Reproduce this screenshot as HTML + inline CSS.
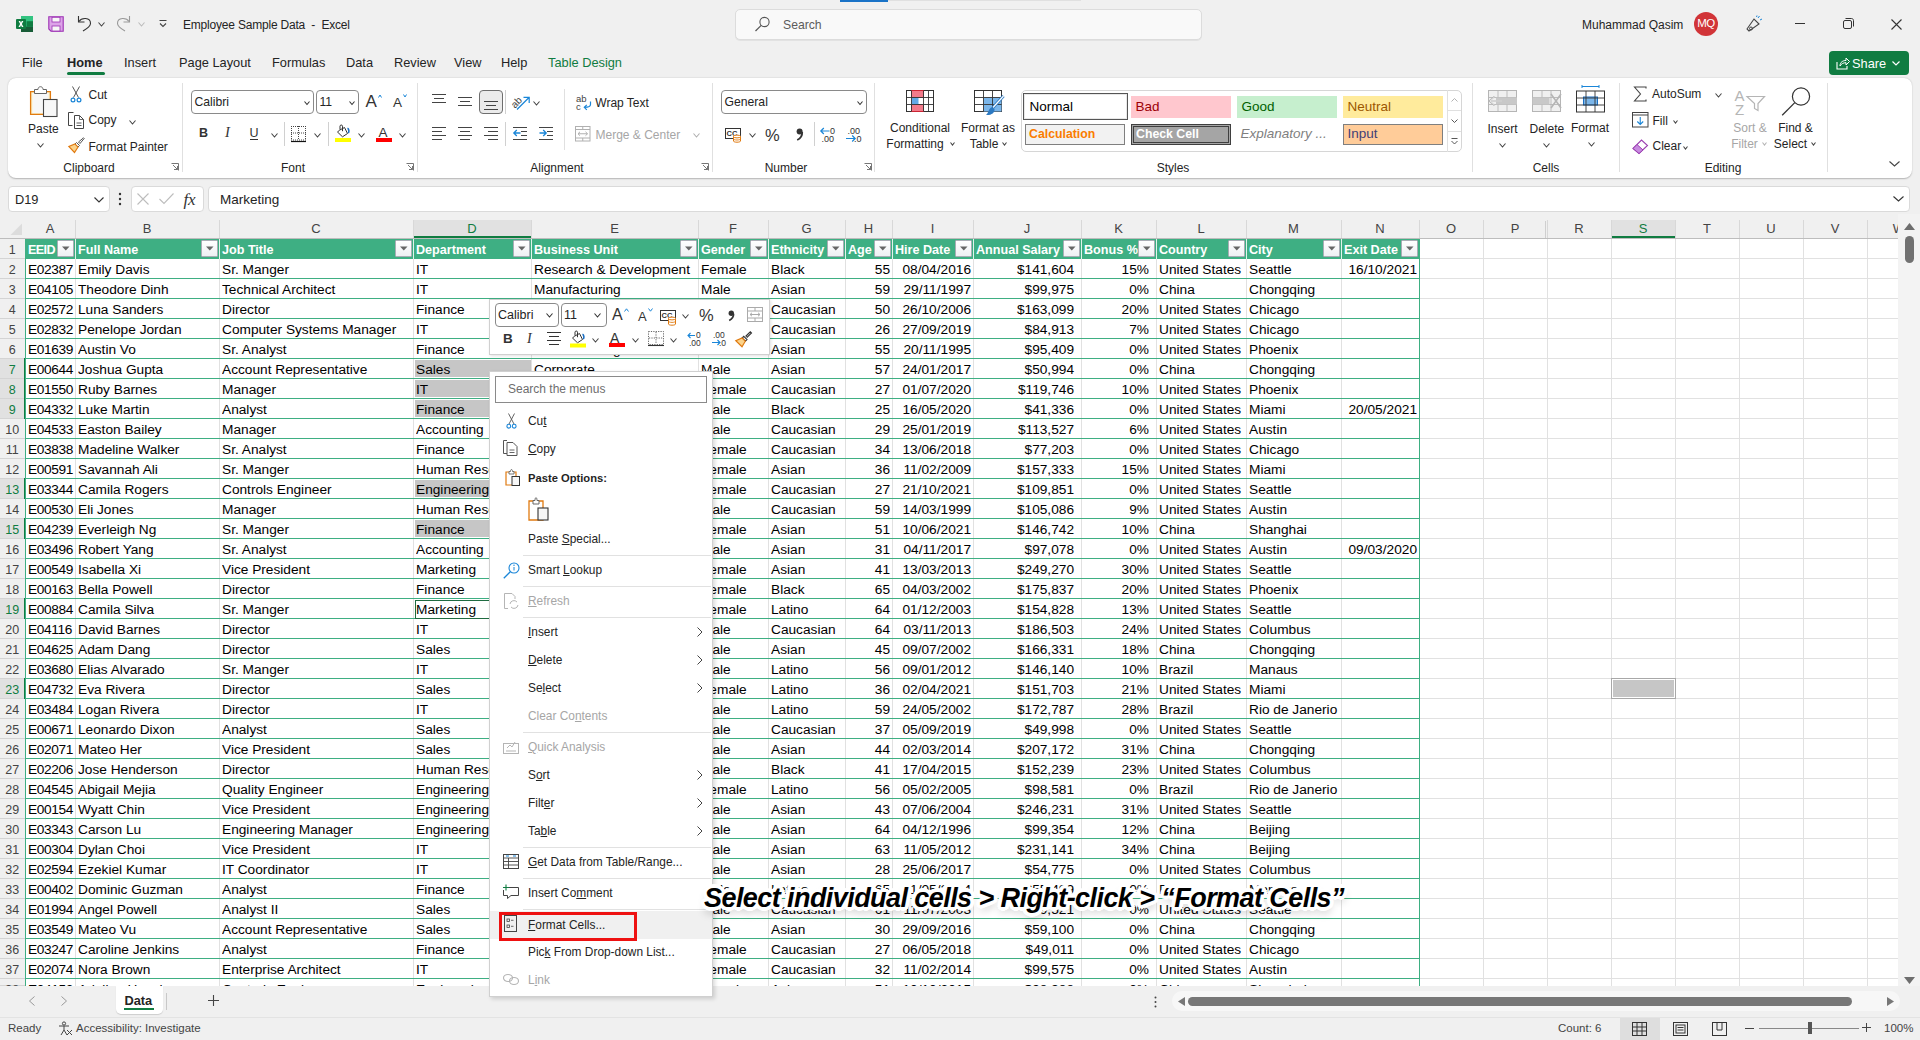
<!DOCTYPE html><html><head><meta charset="utf-8"><title>Excel</title><style>
*{box-sizing:border-box;margin:0;padding:0}
html,body{width:1920px;height:1040px;overflow:hidden}
body{position:relative;background:#f0f0f0;font-family:"Liberation Sans",sans-serif;color:#242424}
.a{position:absolute}
.t{position:absolute;white-space:nowrap;line-height:1}
.c{position:absolute;white-space:nowrap;font-size:13.7px;line-height:1;color:#000}
svg{position:absolute;overflow:visible}
</style></head><body>
<div class="a" style="left:26px;top:239px;width:1872px;height:747px;background:#fff"></div>
<div class="a" style="left:0;top:239px;width:25px;height:20px;background:#f0f0f0;border-bottom:1px solid #d4d4d4"></div>
<div class="a" style="left:0;top:239px;width:25px;height:20px;overflow:hidden"><div class="t" style="left:0;width:24.5px;text-align:center;top:5px;font-size:12.5px;color:#444">1</div></div>
<div class="a" style="left:0;top:259px;width:25px;height:20px;background:#f0f0f0;border-bottom:1px solid #d4d4d4"></div>
<div class="a" style="left:0;top:259px;width:25px;height:20px;overflow:hidden"><div class="t" style="left:0;width:24.5px;text-align:center;top:5px;font-size:12.5px;color:#444">2</div></div>
<div class="a" style="left:0;top:279px;width:25px;height:20px;background:#f0f0f0;border-bottom:1px solid #d4d4d4"></div>
<div class="a" style="left:0;top:279px;width:25px;height:20px;overflow:hidden"><div class="t" style="left:0;width:24.5px;text-align:center;top:5px;font-size:12.5px;color:#444">3</div></div>
<div class="a" style="left:0;top:299px;width:25px;height:20px;background:#f0f0f0;border-bottom:1px solid #d4d4d4"></div>
<div class="a" style="left:0;top:299px;width:25px;height:20px;overflow:hidden"><div class="t" style="left:0;width:24.5px;text-align:center;top:5px;font-size:12.5px;color:#444">4</div></div>
<div class="a" style="left:0;top:319px;width:25px;height:20px;background:#f0f0f0;border-bottom:1px solid #d4d4d4"></div>
<div class="a" style="left:0;top:319px;width:25px;height:20px;overflow:hidden"><div class="t" style="left:0;width:24.5px;text-align:center;top:5px;font-size:12.5px;color:#444">5</div></div>
<div class="a" style="left:0;top:339px;width:25px;height:20px;background:#f0f0f0;border-bottom:1px solid #d4d4d4"></div>
<div class="a" style="left:0;top:339px;width:25px;height:20px;overflow:hidden"><div class="t" style="left:0;width:24.5px;text-align:center;top:5px;font-size:12.5px;color:#444">6</div></div>
<div class="a" style="left:0;top:359px;width:25px;height:20px;background:#e1e1e1;border-bottom:1px solid #d4d4d4"></div>
<div class="a" style="left:0;top:359px;width:25px;height:20px;overflow:hidden"><div class="t" style="left:0;width:24.5px;text-align:center;top:5px;font-size:12.5px;color:#107c41">7</div></div>
<div class="a" style="left:24px;top:358px;width:2px;height:21px;background:#107c41"></div>
<div class="a" style="left:0;top:379px;width:25px;height:20px;background:#e1e1e1;border-bottom:1px solid #d4d4d4"></div>
<div class="a" style="left:0;top:379px;width:25px;height:20px;overflow:hidden"><div class="t" style="left:0;width:24.5px;text-align:center;top:5px;font-size:12.5px;color:#107c41">8</div></div>
<div class="a" style="left:24px;top:378px;width:2px;height:21px;background:#107c41"></div>
<div class="a" style="left:0;top:399px;width:25px;height:20px;background:#e1e1e1;border-bottom:1px solid #d4d4d4"></div>
<div class="a" style="left:0;top:399px;width:25px;height:20px;overflow:hidden"><div class="t" style="left:0;width:24.5px;text-align:center;top:5px;font-size:12.5px;color:#107c41">9</div></div>
<div class="a" style="left:24px;top:398px;width:2px;height:21px;background:#107c41"></div>
<div class="a" style="left:0;top:419px;width:25px;height:20px;background:#f0f0f0;border-bottom:1px solid #d4d4d4"></div>
<div class="a" style="left:0;top:419px;width:25px;height:20px;overflow:hidden"><div class="t" style="left:0;width:24.5px;text-align:center;top:5px;font-size:12.5px;color:#444">10</div></div>
<div class="a" style="left:0;top:439px;width:25px;height:20px;background:#f0f0f0;border-bottom:1px solid #d4d4d4"></div>
<div class="a" style="left:0;top:439px;width:25px;height:20px;overflow:hidden"><div class="t" style="left:0;width:24.5px;text-align:center;top:5px;font-size:12.5px;color:#444">11</div></div>
<div class="a" style="left:0;top:459px;width:25px;height:20px;background:#f0f0f0;border-bottom:1px solid #d4d4d4"></div>
<div class="a" style="left:0;top:459px;width:25px;height:20px;overflow:hidden"><div class="t" style="left:0;width:24.5px;text-align:center;top:5px;font-size:12.5px;color:#444">12</div></div>
<div class="a" style="left:0;top:479px;width:25px;height:20px;background:#e1e1e1;border-bottom:1px solid #d4d4d4"></div>
<div class="a" style="left:0;top:479px;width:25px;height:20px;overflow:hidden"><div class="t" style="left:0;width:24.5px;text-align:center;top:5px;font-size:12.5px;color:#107c41">13</div></div>
<div class="a" style="left:24px;top:478px;width:2px;height:21px;background:#107c41"></div>
<div class="a" style="left:0;top:499px;width:25px;height:20px;background:#f0f0f0;border-bottom:1px solid #d4d4d4"></div>
<div class="a" style="left:0;top:499px;width:25px;height:20px;overflow:hidden"><div class="t" style="left:0;width:24.5px;text-align:center;top:5px;font-size:12.5px;color:#444">14</div></div>
<div class="a" style="left:0;top:519px;width:25px;height:20px;background:#e1e1e1;border-bottom:1px solid #d4d4d4"></div>
<div class="a" style="left:0;top:519px;width:25px;height:20px;overflow:hidden"><div class="t" style="left:0;width:24.5px;text-align:center;top:5px;font-size:12.5px;color:#107c41">15</div></div>
<div class="a" style="left:24px;top:518px;width:2px;height:21px;background:#107c41"></div>
<div class="a" style="left:0;top:539px;width:25px;height:20px;background:#f0f0f0;border-bottom:1px solid #d4d4d4"></div>
<div class="a" style="left:0;top:539px;width:25px;height:20px;overflow:hidden"><div class="t" style="left:0;width:24.5px;text-align:center;top:5px;font-size:12.5px;color:#444">16</div></div>
<div class="a" style="left:0;top:559px;width:25px;height:20px;background:#f0f0f0;border-bottom:1px solid #d4d4d4"></div>
<div class="a" style="left:0;top:559px;width:25px;height:20px;overflow:hidden"><div class="t" style="left:0;width:24.5px;text-align:center;top:5px;font-size:12.5px;color:#444">17</div></div>
<div class="a" style="left:0;top:579px;width:25px;height:20px;background:#f0f0f0;border-bottom:1px solid #d4d4d4"></div>
<div class="a" style="left:0;top:579px;width:25px;height:20px;overflow:hidden"><div class="t" style="left:0;width:24.5px;text-align:center;top:5px;font-size:12.5px;color:#444">18</div></div>
<div class="a" style="left:0;top:599px;width:25px;height:20px;background:#e1e1e1;border-bottom:1px solid #d4d4d4"></div>
<div class="a" style="left:0;top:599px;width:25px;height:20px;overflow:hidden"><div class="t" style="left:0;width:24.5px;text-align:center;top:5px;font-size:12.5px;color:#107c41">19</div></div>
<div class="a" style="left:24px;top:598px;width:2px;height:21px;background:#107c41"></div>
<div class="a" style="left:0;top:619px;width:25px;height:20px;background:#f0f0f0;border-bottom:1px solid #d4d4d4"></div>
<div class="a" style="left:0;top:619px;width:25px;height:20px;overflow:hidden"><div class="t" style="left:0;width:24.5px;text-align:center;top:5px;font-size:12.5px;color:#444">20</div></div>
<div class="a" style="left:0;top:639px;width:25px;height:20px;background:#f0f0f0;border-bottom:1px solid #d4d4d4"></div>
<div class="a" style="left:0;top:639px;width:25px;height:20px;overflow:hidden"><div class="t" style="left:0;width:24.5px;text-align:center;top:5px;font-size:12.5px;color:#444">21</div></div>
<div class="a" style="left:0;top:659px;width:25px;height:20px;background:#f0f0f0;border-bottom:1px solid #d4d4d4"></div>
<div class="a" style="left:0;top:659px;width:25px;height:20px;overflow:hidden"><div class="t" style="left:0;width:24.5px;text-align:center;top:5px;font-size:12.5px;color:#444">22</div></div>
<div class="a" style="left:0;top:679px;width:25px;height:20px;background:#e1e1e1;border-bottom:1px solid #d4d4d4"></div>
<div class="a" style="left:0;top:679px;width:25px;height:20px;overflow:hidden"><div class="t" style="left:0;width:24.5px;text-align:center;top:5px;font-size:12.5px;color:#107c41">23</div></div>
<div class="a" style="left:24px;top:678px;width:2px;height:21px;background:#107c41"></div>
<div class="a" style="left:0;top:699px;width:25px;height:20px;background:#f0f0f0;border-bottom:1px solid #d4d4d4"></div>
<div class="a" style="left:0;top:699px;width:25px;height:20px;overflow:hidden"><div class="t" style="left:0;width:24.5px;text-align:center;top:5px;font-size:12.5px;color:#444">24</div></div>
<div class="a" style="left:0;top:719px;width:25px;height:20px;background:#f0f0f0;border-bottom:1px solid #d4d4d4"></div>
<div class="a" style="left:0;top:719px;width:25px;height:20px;overflow:hidden"><div class="t" style="left:0;width:24.5px;text-align:center;top:5px;font-size:12.5px;color:#444">25</div></div>
<div class="a" style="left:0;top:739px;width:25px;height:20px;background:#f0f0f0;border-bottom:1px solid #d4d4d4"></div>
<div class="a" style="left:0;top:739px;width:25px;height:20px;overflow:hidden"><div class="t" style="left:0;width:24.5px;text-align:center;top:5px;font-size:12.5px;color:#444">26</div></div>
<div class="a" style="left:0;top:759px;width:25px;height:20px;background:#f0f0f0;border-bottom:1px solid #d4d4d4"></div>
<div class="a" style="left:0;top:759px;width:25px;height:20px;overflow:hidden"><div class="t" style="left:0;width:24.5px;text-align:center;top:5px;font-size:12.5px;color:#444">27</div></div>
<div class="a" style="left:0;top:779px;width:25px;height:20px;background:#f0f0f0;border-bottom:1px solid #d4d4d4"></div>
<div class="a" style="left:0;top:779px;width:25px;height:20px;overflow:hidden"><div class="t" style="left:0;width:24.5px;text-align:center;top:5px;font-size:12.5px;color:#444">28</div></div>
<div class="a" style="left:0;top:799px;width:25px;height:20px;background:#f0f0f0;border-bottom:1px solid #d4d4d4"></div>
<div class="a" style="left:0;top:799px;width:25px;height:20px;overflow:hidden"><div class="t" style="left:0;width:24.5px;text-align:center;top:5px;font-size:12.5px;color:#444">29</div></div>
<div class="a" style="left:0;top:819px;width:25px;height:20px;background:#f0f0f0;border-bottom:1px solid #d4d4d4"></div>
<div class="a" style="left:0;top:819px;width:25px;height:20px;overflow:hidden"><div class="t" style="left:0;width:24.5px;text-align:center;top:5px;font-size:12.5px;color:#444">30</div></div>
<div class="a" style="left:0;top:839px;width:25px;height:20px;background:#f0f0f0;border-bottom:1px solid #d4d4d4"></div>
<div class="a" style="left:0;top:839px;width:25px;height:20px;overflow:hidden"><div class="t" style="left:0;width:24.5px;text-align:center;top:5px;font-size:12.5px;color:#444">31</div></div>
<div class="a" style="left:0;top:859px;width:25px;height:20px;background:#f0f0f0;border-bottom:1px solid #d4d4d4"></div>
<div class="a" style="left:0;top:859px;width:25px;height:20px;overflow:hidden"><div class="t" style="left:0;width:24.5px;text-align:center;top:5px;font-size:12.5px;color:#444">32</div></div>
<div class="a" style="left:0;top:879px;width:25px;height:20px;background:#f0f0f0;border-bottom:1px solid #d4d4d4"></div>
<div class="a" style="left:0;top:879px;width:25px;height:20px;overflow:hidden"><div class="t" style="left:0;width:24.5px;text-align:center;top:5px;font-size:12.5px;color:#444">33</div></div>
<div class="a" style="left:0;top:899px;width:25px;height:20px;background:#f0f0f0;border-bottom:1px solid #d4d4d4"></div>
<div class="a" style="left:0;top:899px;width:25px;height:20px;overflow:hidden"><div class="t" style="left:0;width:24.5px;text-align:center;top:5px;font-size:12.5px;color:#444">34</div></div>
<div class="a" style="left:0;top:919px;width:25px;height:20px;background:#f0f0f0;border-bottom:1px solid #d4d4d4"></div>
<div class="a" style="left:0;top:919px;width:25px;height:20px;overflow:hidden"><div class="t" style="left:0;width:24.5px;text-align:center;top:5px;font-size:12.5px;color:#444">35</div></div>
<div class="a" style="left:0;top:939px;width:25px;height:20px;background:#f0f0f0;border-bottom:1px solid #d4d4d4"></div>
<div class="a" style="left:0;top:939px;width:25px;height:20px;overflow:hidden"><div class="t" style="left:0;width:24.5px;text-align:center;top:5px;font-size:12.5px;color:#444">36</div></div>
<div class="a" style="left:0;top:959px;width:25px;height:20px;background:#f0f0f0;border-bottom:1px solid #d4d4d4"></div>
<div class="a" style="left:0;top:959px;width:25px;height:20px;overflow:hidden"><div class="t" style="left:0;width:24.5px;text-align:center;top:5px;font-size:12.5px;color:#444">37</div></div>
<div class="a" style="left:0;top:979px;width:25px;height:7px;background:#f0f0f0;border-bottom:1px solid #d4d4d4"></div>
<div class="a" style="left:0;top:979px;width:25px;height:7px;overflow:hidden"><div class="t" style="left:0;width:24.5px;text-align:center;top:5px;font-size:12.5px;color:#444">38</div></div>
<div class="a" style="left:25px;top:238px;width:1px;height:748px;background:#c8c8c8"></div>
<svg style="left:9px;top:223px" width="14" height="13"><path d="M13 0.5 L13 12 L1.5 12 Z" fill="#dcdcdc"/></svg>
<div class="a" style="left:75px;top:220px;width:1px;height:18px;background:#d8d8d8"></div>
<div class="a" style="left:25px;top:220px;width:50px;height:18px;overflow:hidden"><div class="t" style="left:0;width:50px;top:2px;text-align:center;font-size:13px;color:#444">A</div></div>
<div class="a" style="left:219px;top:220px;width:1px;height:18px;background:#d8d8d8"></div>
<div class="a" style="left:75px;top:220px;width:144px;height:18px;overflow:hidden"><div class="t" style="left:0;width:144px;top:2px;text-align:center;font-size:13px;color:#444">B</div></div>
<div class="a" style="left:413px;top:220px;width:1px;height:18px;background:#d8d8d8"></div>
<div class="a" style="left:219px;top:220px;width:194px;height:18px;overflow:hidden"><div class="t" style="left:0;width:194px;top:2px;text-align:center;font-size:13px;color:#444">C</div></div>
<div class="a" style="left:414px;top:220px;width:117px;height:18px;background:#e1e1e1;border-bottom:2px solid #107c41"></div>
<div class="a" style="left:531px;top:220px;width:1px;height:18px;background:#d8d8d8"></div>
<div class="a" style="left:413px;top:220px;width:118px;height:18px;overflow:hidden"><div class="t" style="left:0;width:118px;top:2px;text-align:center;font-size:13px;color:#107c41">D</div></div>
<div class="a" style="left:698px;top:220px;width:1px;height:18px;background:#d8d8d8"></div>
<div class="a" style="left:531px;top:220px;width:167px;height:18px;overflow:hidden"><div class="t" style="left:0;width:167px;top:2px;text-align:center;font-size:13px;color:#444">E</div></div>
<div class="a" style="left:768px;top:220px;width:1px;height:18px;background:#d8d8d8"></div>
<div class="a" style="left:698px;top:220px;width:70px;height:18px;overflow:hidden"><div class="t" style="left:0;width:70px;top:2px;text-align:center;font-size:13px;color:#444">F</div></div>
<div class="a" style="left:845px;top:220px;width:1px;height:18px;background:#d8d8d8"></div>
<div class="a" style="left:768px;top:220px;width:77px;height:18px;overflow:hidden"><div class="t" style="left:0;width:77px;top:2px;text-align:center;font-size:13px;color:#444">G</div></div>
<div class="a" style="left:892px;top:220px;width:1px;height:18px;background:#d8d8d8"></div>
<div class="a" style="left:845px;top:220px;width:47px;height:18px;overflow:hidden"><div class="t" style="left:0;width:47px;top:2px;text-align:center;font-size:13px;color:#444">H</div></div>
<div class="a" style="left:973px;top:220px;width:1px;height:18px;background:#d8d8d8"></div>
<div class="a" style="left:892px;top:220px;width:81px;height:18px;overflow:hidden"><div class="t" style="left:0;width:81px;top:2px;text-align:center;font-size:13px;color:#444">I</div></div>
<div class="a" style="left:1081px;top:220px;width:1px;height:18px;background:#d8d8d8"></div>
<div class="a" style="left:973px;top:220px;width:108px;height:18px;overflow:hidden"><div class="t" style="left:0;width:108px;top:2px;text-align:center;font-size:13px;color:#444">J</div></div>
<div class="a" style="left:1156px;top:220px;width:1px;height:18px;background:#d8d8d8"></div>
<div class="a" style="left:1081px;top:220px;width:75px;height:18px;overflow:hidden"><div class="t" style="left:0;width:75px;top:2px;text-align:center;font-size:13px;color:#444">K</div></div>
<div class="a" style="left:1246px;top:220px;width:1px;height:18px;background:#d8d8d8"></div>
<div class="a" style="left:1156px;top:220px;width:90px;height:18px;overflow:hidden"><div class="t" style="left:0;width:90px;top:2px;text-align:center;font-size:13px;color:#444">L</div></div>
<div class="a" style="left:1341px;top:220px;width:1px;height:18px;background:#d8d8d8"></div>
<div class="a" style="left:1246px;top:220px;width:95px;height:18px;overflow:hidden"><div class="t" style="left:0;width:95px;top:2px;text-align:center;font-size:13px;color:#444">M</div></div>
<div class="a" style="left:1419px;top:220px;width:1px;height:18px;background:#d8d8d8"></div>
<div class="a" style="left:1341px;top:220px;width:78px;height:18px;overflow:hidden"><div class="t" style="left:0;width:78px;top:2px;text-align:center;font-size:13px;color:#444">N</div></div>
<div class="a" style="left:1483px;top:220px;width:1px;height:18px;background:#d8d8d8"></div>
<div class="a" style="left:1419px;top:220px;width:64px;height:18px;overflow:hidden"><div class="t" style="left:0;width:64px;top:2px;text-align:center;font-size:13px;color:#444">O</div></div>
<div class="a" style="left:1547px;top:220px;width:1px;height:18px;background:#d8d8d8"></div>
<div class="a" style="left:1483px;top:220px;width:64px;height:18px;overflow:hidden"><div class="t" style="left:0;width:64px;top:2px;text-align:center;font-size:13px;color:#444">P</div></div>
<div class="a" style="left:1611px;top:220px;width:1px;height:18px;background:#d8d8d8"></div>
<div class="a" style="left:1547px;top:220px;width:64px;height:18px;overflow:hidden"><div class="t" style="left:0;width:64px;top:2px;text-align:center;font-size:13px;color:#444">R</div></div>
<div class="a" style="left:1612px;top:220px;width:63px;height:18px;background:#e1e1e1;border-bottom:2px solid #107c41"></div>
<div class="a" style="left:1675px;top:220px;width:1px;height:18px;background:#d8d8d8"></div>
<div class="a" style="left:1611px;top:220px;width:64px;height:18px;overflow:hidden"><div class="t" style="left:0;width:64px;top:2px;text-align:center;font-size:13px;color:#107c41">S</div></div>
<div class="a" style="left:1739px;top:220px;width:1px;height:18px;background:#d8d8d8"></div>
<div class="a" style="left:1675px;top:220px;width:64px;height:18px;overflow:hidden"><div class="t" style="left:0;width:64px;top:2px;text-align:center;font-size:13px;color:#444">T</div></div>
<div class="a" style="left:1803px;top:220px;width:1px;height:18px;background:#d8d8d8"></div>
<div class="a" style="left:1739px;top:220px;width:64px;height:18px;overflow:hidden"><div class="t" style="left:0;width:64px;top:2px;text-align:center;font-size:13px;color:#444">U</div></div>
<div class="a" style="left:1867px;top:220px;width:1px;height:18px;background:#d8d8d8"></div>
<div class="a" style="left:1803px;top:220px;width:64px;height:18px;overflow:hidden"><div class="t" style="left:0;width:64px;top:2px;text-align:center;font-size:13px;color:#444">V</div></div>
<div class="a" style="left:1931px;top:220px;width:1px;height:18px;background:#d8d8d8"></div>
<div class="a" style="left:1867px;top:220px;width:31px;height:18px;overflow:hidden"><div class="t" style="left:0;width:64px;top:2px;text-align:center;font-size:13px;color:#444">W</div></div>
<div class="a" style="left:0;top:238px;width:1898px;height:1px;background:#bdbdbd"></div>
<div class="a" style="left:1545px;top:221px;width:1px;height:17px;background:#cfcfcf"></div>
<div class="a" style="left:75px;top:239px;width:1px;height:747px;background:#e1e1e1"></div>
<div class="a" style="left:219px;top:239px;width:1px;height:747px;background:#e1e1e1"></div>
<div class="a" style="left:413px;top:239px;width:1px;height:747px;background:#e1e1e1"></div>
<div class="a" style="left:531px;top:239px;width:1px;height:747px;background:#e1e1e1"></div>
<div class="a" style="left:698px;top:239px;width:1px;height:747px;background:#e1e1e1"></div>
<div class="a" style="left:768px;top:239px;width:1px;height:747px;background:#e1e1e1"></div>
<div class="a" style="left:845px;top:239px;width:1px;height:747px;background:#e1e1e1"></div>
<div class="a" style="left:892px;top:239px;width:1px;height:747px;background:#e1e1e1"></div>
<div class="a" style="left:973px;top:239px;width:1px;height:747px;background:#e1e1e1"></div>
<div class="a" style="left:1081px;top:239px;width:1px;height:747px;background:#e1e1e1"></div>
<div class="a" style="left:1156px;top:239px;width:1px;height:747px;background:#e1e1e1"></div>
<div class="a" style="left:1246px;top:239px;width:1px;height:747px;background:#e1e1e1"></div>
<div class="a" style="left:1341px;top:239px;width:1px;height:747px;background:#e1e1e1"></div>
<div class="a" style="left:1419px;top:239px;width:1px;height:747px;background:#e1e1e1"></div>
<div class="a" style="left:1483px;top:239px;width:1px;height:747px;background:#e1e1e1"></div>
<div class="a" style="left:1547px;top:239px;width:1px;height:747px;background:#e1e1e1"></div>
<div class="a" style="left:1611px;top:239px;width:1px;height:747px;background:#e1e1e1"></div>
<div class="a" style="left:1675px;top:239px;width:1px;height:747px;background:#e1e1e1"></div>
<div class="a" style="left:1739px;top:239px;width:1px;height:747px;background:#e1e1e1"></div>
<div class="a" style="left:1803px;top:239px;width:1px;height:747px;background:#e1e1e1"></div>
<div class="a" style="left:1867px;top:239px;width:1px;height:747px;background:#e1e1e1"></div>
<div class="a" style="left:1420px;top:258px;width:478px;height:1px;background:#e1e1e1"></div>
<div class="a" style="left:1420px;top:278px;width:478px;height:1px;background:#e1e1e1"></div>
<div class="a" style="left:1420px;top:298px;width:478px;height:1px;background:#e1e1e1"></div>
<div class="a" style="left:1420px;top:318px;width:478px;height:1px;background:#e1e1e1"></div>
<div class="a" style="left:1420px;top:338px;width:478px;height:1px;background:#e1e1e1"></div>
<div class="a" style="left:1420px;top:358px;width:478px;height:1px;background:#e1e1e1"></div>
<div class="a" style="left:1420px;top:378px;width:478px;height:1px;background:#e1e1e1"></div>
<div class="a" style="left:1420px;top:398px;width:478px;height:1px;background:#e1e1e1"></div>
<div class="a" style="left:1420px;top:418px;width:478px;height:1px;background:#e1e1e1"></div>
<div class="a" style="left:1420px;top:438px;width:478px;height:1px;background:#e1e1e1"></div>
<div class="a" style="left:1420px;top:458px;width:478px;height:1px;background:#e1e1e1"></div>
<div class="a" style="left:1420px;top:478px;width:478px;height:1px;background:#e1e1e1"></div>
<div class="a" style="left:1420px;top:498px;width:478px;height:1px;background:#e1e1e1"></div>
<div class="a" style="left:1420px;top:518px;width:478px;height:1px;background:#e1e1e1"></div>
<div class="a" style="left:1420px;top:538px;width:478px;height:1px;background:#e1e1e1"></div>
<div class="a" style="left:1420px;top:558px;width:478px;height:1px;background:#e1e1e1"></div>
<div class="a" style="left:1420px;top:578px;width:478px;height:1px;background:#e1e1e1"></div>
<div class="a" style="left:1420px;top:598px;width:478px;height:1px;background:#e1e1e1"></div>
<div class="a" style="left:1420px;top:618px;width:478px;height:1px;background:#e1e1e1"></div>
<div class="a" style="left:1420px;top:638px;width:478px;height:1px;background:#e1e1e1"></div>
<div class="a" style="left:1420px;top:658px;width:478px;height:1px;background:#e1e1e1"></div>
<div class="a" style="left:1420px;top:678px;width:478px;height:1px;background:#e1e1e1"></div>
<div class="a" style="left:1420px;top:698px;width:478px;height:1px;background:#e1e1e1"></div>
<div class="a" style="left:1420px;top:718px;width:478px;height:1px;background:#e1e1e1"></div>
<div class="a" style="left:1420px;top:738px;width:478px;height:1px;background:#e1e1e1"></div>
<div class="a" style="left:1420px;top:758px;width:478px;height:1px;background:#e1e1e1"></div>
<div class="a" style="left:1420px;top:778px;width:478px;height:1px;background:#e1e1e1"></div>
<div class="a" style="left:1420px;top:798px;width:478px;height:1px;background:#e1e1e1"></div>
<div class="a" style="left:1420px;top:818px;width:478px;height:1px;background:#e1e1e1"></div>
<div class="a" style="left:1420px;top:838px;width:478px;height:1px;background:#e1e1e1"></div>
<div class="a" style="left:1420px;top:858px;width:478px;height:1px;background:#e1e1e1"></div>
<div class="a" style="left:1420px;top:878px;width:478px;height:1px;background:#e1e1e1"></div>
<div class="a" style="left:1420px;top:898px;width:478px;height:1px;background:#e1e1e1"></div>
<div class="a" style="left:1420px;top:918px;width:478px;height:1px;background:#e1e1e1"></div>
<div class="a" style="left:1420px;top:938px;width:478px;height:1px;background:#e1e1e1"></div>
<div class="a" style="left:1420px;top:958px;width:478px;height:1px;background:#e1e1e1"></div>
<div class="a" style="left:1420px;top:978px;width:478px;height:1px;background:#e1e1e1"></div>
<div class="a" style="left:26px;top:239px;width:1394px;height:20px;background:#3eaf83"></div>
<div class="a" style="left:75px;top:239px;width:1px;height:20px;background:#fff;opacity:.85"></div>
<div class="c" style="left:28px;top:244px;color:#fff;font-weight:bold;font-size:12.6px;letter-spacing:-0.6px">EEID</div>
<div class="a" style="left:57px;top:240px;width:17px;height:17px;background:linear-gradient(#fff,#eef0f3);border:1px solid #a9adb5;border-radius:1px"></div>
<svg style="left:62px;top:246px" width="8" height="5"><path d="M0 0.5 L7.5 0.5 L3.75 4.5 Z" fill="#666"/></svg>
<div class="a" style="left:219px;top:239px;width:1px;height:20px;background:#fff;opacity:.85"></div>
<div class="c" style="left:78px;top:244px;color:#fff;font-weight:bold;font-size:12.6px;">Full Name</div>
<div class="a" style="left:201px;top:240px;width:17px;height:17px;background:linear-gradient(#fff,#eef0f3);border:1px solid #a9adb5;border-radius:1px"></div>
<svg style="left:206px;top:246px" width="8" height="5"><path d="M0 0.5 L7.5 0.5 L3.75 4.5 Z" fill="#666"/></svg>
<div class="a" style="left:413px;top:239px;width:1px;height:20px;background:#fff;opacity:.85"></div>
<div class="c" style="left:222px;top:244px;color:#fff;font-weight:bold;font-size:12.6px;">Job Title</div>
<div class="a" style="left:395px;top:240px;width:17px;height:17px;background:linear-gradient(#fff,#eef0f3);border:1px solid #a9adb5;border-radius:1px"></div>
<svg style="left:400px;top:246px" width="8" height="5"><path d="M0 0.5 L7.5 0.5 L3.75 4.5 Z" fill="#666"/></svg>
<div class="a" style="left:531px;top:239px;width:1px;height:20px;background:#fff;opacity:.85"></div>
<div class="c" style="left:416px;top:244px;color:#fff;font-weight:bold;font-size:12.6px;">Department</div>
<div class="a" style="left:513px;top:240px;width:17px;height:17px;background:linear-gradient(#fff,#eef0f3);border:1px solid #a9adb5;border-radius:1px"></div>
<svg style="left:518px;top:246px" width="8" height="5"><path d="M0 0.5 L7.5 0.5 L3.75 4.5 Z" fill="#666"/></svg>
<div class="a" style="left:698px;top:239px;width:1px;height:20px;background:#fff;opacity:.85"></div>
<div class="c" style="left:534px;top:244px;color:#fff;font-weight:bold;font-size:12.6px;">Business Unit</div>
<div class="a" style="left:680px;top:240px;width:17px;height:17px;background:linear-gradient(#fff,#eef0f3);border:1px solid #a9adb5;border-radius:1px"></div>
<svg style="left:685px;top:246px" width="8" height="5"><path d="M0 0.5 L7.5 0.5 L3.75 4.5 Z" fill="#666"/></svg>
<div class="a" style="left:768px;top:239px;width:1px;height:20px;background:#fff;opacity:.85"></div>
<div class="c" style="left:701px;top:244px;color:#fff;font-weight:bold;font-size:12.6px;">Gender</div>
<div class="a" style="left:750px;top:240px;width:17px;height:17px;background:linear-gradient(#fff,#eef0f3);border:1px solid #a9adb5;border-radius:1px"></div>
<svg style="left:755px;top:246px" width="8" height="5"><path d="M0 0.5 L7.5 0.5 L3.75 4.5 Z" fill="#666"/></svg>
<div class="a" style="left:845px;top:239px;width:1px;height:20px;background:#fff;opacity:.85"></div>
<div class="c" style="left:771px;top:244px;color:#fff;font-weight:bold;font-size:12.6px;">Ethnicity</div>
<div class="a" style="left:827px;top:240px;width:17px;height:17px;background:linear-gradient(#fff,#eef0f3);border:1px solid #a9adb5;border-radius:1px"></div>
<svg style="left:832px;top:246px" width="8" height="5"><path d="M0 0.5 L7.5 0.5 L3.75 4.5 Z" fill="#666"/></svg>
<div class="a" style="left:892px;top:239px;width:1px;height:20px;background:#fff;opacity:.85"></div>
<div class="c" style="left:848px;top:244px;color:#fff;font-weight:bold;font-size:12.6px;">Age</div>
<div class="a" style="left:874px;top:240px;width:17px;height:17px;background:linear-gradient(#fff,#eef0f3);border:1px solid #a9adb5;border-radius:1px"></div>
<svg style="left:879px;top:246px" width="8" height="5"><path d="M0 0.5 L7.5 0.5 L3.75 4.5 Z" fill="#666"/></svg>
<div class="a" style="left:973px;top:239px;width:1px;height:20px;background:#fff;opacity:.85"></div>
<div class="c" style="left:895px;top:244px;color:#fff;font-weight:bold;font-size:12.6px;">Hire Date</div>
<div class="a" style="left:955px;top:240px;width:17px;height:17px;background:linear-gradient(#fff,#eef0f3);border:1px solid #a9adb5;border-radius:1px"></div>
<svg style="left:960px;top:246px" width="8" height="5"><path d="M0 0.5 L7.5 0.5 L3.75 4.5 Z" fill="#666"/></svg>
<div class="a" style="left:1081px;top:239px;width:1px;height:20px;background:#fff;opacity:.85"></div>
<div class="c" style="left:976px;top:244px;color:#fff;font-weight:bold;font-size:12.6px;">Annual Salary</div>
<div class="a" style="left:1063px;top:240px;width:17px;height:17px;background:linear-gradient(#fff,#eef0f3);border:1px solid #a9adb5;border-radius:1px"></div>
<svg style="left:1068px;top:246px" width="8" height="5"><path d="M0 0.5 L7.5 0.5 L3.75 4.5 Z" fill="#666"/></svg>
<div class="a" style="left:1156px;top:239px;width:1px;height:20px;background:#fff;opacity:.85"></div>
<div class="c" style="left:1084px;top:244px;color:#fff;font-weight:bold;font-size:12.6px;">Bonus %</div>
<div class="a" style="left:1138px;top:240px;width:17px;height:17px;background:linear-gradient(#fff,#eef0f3);border:1px solid #a9adb5;border-radius:1px"></div>
<svg style="left:1143px;top:246px" width="8" height="5"><path d="M0 0.5 L7.5 0.5 L3.75 4.5 Z" fill="#666"/></svg>
<div class="a" style="left:1246px;top:239px;width:1px;height:20px;background:#fff;opacity:.85"></div>
<div class="c" style="left:1159px;top:244px;color:#fff;font-weight:bold;font-size:12.6px;">Country</div>
<div class="a" style="left:1228px;top:240px;width:17px;height:17px;background:linear-gradient(#fff,#eef0f3);border:1px solid #a9adb5;border-radius:1px"></div>
<svg style="left:1233px;top:246px" width="8" height="5"><path d="M0 0.5 L7.5 0.5 L3.75 4.5 Z" fill="#666"/></svg>
<div class="a" style="left:1341px;top:239px;width:1px;height:20px;background:#fff;opacity:.85"></div>
<div class="c" style="left:1249px;top:244px;color:#fff;font-weight:bold;font-size:12.6px;">City</div>
<div class="a" style="left:1323px;top:240px;width:17px;height:17px;background:linear-gradient(#fff,#eef0f3);border:1px solid #a9adb5;border-radius:1px"></div>
<svg style="left:1328px;top:246px" width="8" height="5"><path d="M0 0.5 L7.5 0.5 L3.75 4.5 Z" fill="#666"/></svg>
<div class="a" style="left:1419px;top:239px;width:1px;height:20px;background:#fff;opacity:.85"></div>
<div class="c" style="left:1344px;top:244px;color:#fff;font-weight:bold;font-size:12.6px;">Exit Date</div>
<div class="a" style="left:1401px;top:240px;width:17px;height:17px;background:linear-gradient(#fff,#eef0f3);border:1px solid #a9adb5;border-radius:1px"></div>
<svg style="left:1406px;top:246px" width="8" height="5"><path d="M0 0.5 L7.5 0.5 L3.75 4.5 Z" fill="#666"/></svg>
<div class="a" style="left:26px;top:278px;width:1394px;height:1px;background:#3eaf83"></div>
<div class="a" style="left:28px;top:259px;width:47px;height:19px;overflow:hidden"><div class="c" style="left:0;top:4px;letter-spacing:-0.35px">E02387</div></div>
<div class="a" style="left:78px;top:259px;width:141px;height:19px;overflow:hidden"><div class="c" style="left:0;top:4px;">Emily Davis</div></div>
<div class="a" style="left:222px;top:259px;width:191px;height:19px;overflow:hidden"><div class="c" style="left:0;top:4px;">Sr. Manger</div></div>
<div class="a" style="left:416px;top:259px;width:115px;height:19px;overflow:hidden"><div class="c" style="left:0;top:4px;">IT</div></div>
<div class="a" style="left:534px;top:259px;width:164px;height:19px;overflow:hidden"><div class="c" style="left:0;top:4px;">Research &amp; Development</div></div>
<div class="a" style="left:701px;top:259px;width:67px;height:19px;overflow:hidden"><div class="c" style="left:0;top:4px;">Female</div></div>
<div class="a" style="left:771px;top:259px;width:74px;height:19px;overflow:hidden"><div class="c" style="left:0;top:4px;">Black</div></div>
<div class="a" style="left:846px;top:259px;width:46px;height:19px;overflow:hidden"><div class="c" style="right:2px;top:4px">55</div></div>
<div class="a" style="left:893px;top:259px;width:80px;height:19px;overflow:hidden"><div class="c" style="right:2px;top:4px">08/04/2016</div></div>
<div class="a" style="left:974px;top:259px;width:107px;height:19px;overflow:hidden"><div class="c" style="right:7px;top:4px">$141,604</div></div>
<div class="a" style="left:1082px;top:259px;width:74px;height:19px;overflow:hidden"><div class="c" style="right:7px;top:4px">15%</div></div>
<div class="a" style="left:1159px;top:259px;width:87px;height:19px;overflow:hidden"><div class="c" style="left:0;top:4px;">United States</div></div>
<div class="a" style="left:1249px;top:259px;width:92px;height:19px;overflow:hidden"><div class="c" style="left:0;top:4px;">Seattle</div></div>
<div class="a" style="left:1342px;top:259px;width:77px;height:19px;overflow:hidden"><div class="c" style="right:2px;top:4px">16/10/2021</div></div>
<div class="a" style="left:26px;top:298px;width:1394px;height:1px;background:#3eaf83"></div>
<div class="a" style="left:28px;top:279px;width:47px;height:19px;overflow:hidden"><div class="c" style="left:0;top:4px;letter-spacing:-0.35px">E04105</div></div>
<div class="a" style="left:78px;top:279px;width:141px;height:19px;overflow:hidden"><div class="c" style="left:0;top:4px;">Theodore Dinh</div></div>
<div class="a" style="left:222px;top:279px;width:191px;height:19px;overflow:hidden"><div class="c" style="left:0;top:4px;">Technical Architect</div></div>
<div class="a" style="left:416px;top:279px;width:115px;height:19px;overflow:hidden"><div class="c" style="left:0;top:4px;">IT</div></div>
<div class="a" style="left:534px;top:279px;width:164px;height:19px;overflow:hidden"><div class="c" style="left:0;top:4px;">Manufacturing</div></div>
<div class="a" style="left:701px;top:279px;width:67px;height:19px;overflow:hidden"><div class="c" style="left:0;top:4px;">Male</div></div>
<div class="a" style="left:771px;top:279px;width:74px;height:19px;overflow:hidden"><div class="c" style="left:0;top:4px;">Asian</div></div>
<div class="a" style="left:846px;top:279px;width:46px;height:19px;overflow:hidden"><div class="c" style="right:2px;top:4px">59</div></div>
<div class="a" style="left:893px;top:279px;width:80px;height:19px;overflow:hidden"><div class="c" style="right:2px;top:4px">29/11/1997</div></div>
<div class="a" style="left:974px;top:279px;width:107px;height:19px;overflow:hidden"><div class="c" style="right:7px;top:4px">$99,975</div></div>
<div class="a" style="left:1082px;top:279px;width:74px;height:19px;overflow:hidden"><div class="c" style="right:7px;top:4px">0%</div></div>
<div class="a" style="left:1159px;top:279px;width:87px;height:19px;overflow:hidden"><div class="c" style="left:0;top:4px;">China</div></div>
<div class="a" style="left:1249px;top:279px;width:92px;height:19px;overflow:hidden"><div class="c" style="left:0;top:4px;">Chongqing</div></div>
<div class="a" style="left:26px;top:318px;width:1394px;height:1px;background:#3eaf83"></div>
<div class="a" style="left:28px;top:299px;width:47px;height:19px;overflow:hidden"><div class="c" style="left:0;top:4px;letter-spacing:-0.35px">E02572</div></div>
<div class="a" style="left:78px;top:299px;width:141px;height:19px;overflow:hidden"><div class="c" style="left:0;top:4px;">Luna Sanders</div></div>
<div class="a" style="left:222px;top:299px;width:191px;height:19px;overflow:hidden"><div class="c" style="left:0;top:4px;">Director</div></div>
<div class="a" style="left:416px;top:299px;width:115px;height:19px;overflow:hidden"><div class="c" style="left:0;top:4px;">Finance</div></div>
<div class="a" style="left:534px;top:299px;width:164px;height:19px;overflow:hidden"><div class="c" style="left:0;top:4px;">Speciality Products</div></div>
<div class="a" style="left:701px;top:299px;width:67px;height:19px;overflow:hidden"><div class="c" style="left:0;top:4px;">Female</div></div>
<div class="a" style="left:771px;top:299px;width:74px;height:19px;overflow:hidden"><div class="c" style="left:0;top:4px;">Caucasian</div></div>
<div class="a" style="left:846px;top:299px;width:46px;height:19px;overflow:hidden"><div class="c" style="right:2px;top:4px">50</div></div>
<div class="a" style="left:893px;top:299px;width:80px;height:19px;overflow:hidden"><div class="c" style="right:2px;top:4px">26/10/2006</div></div>
<div class="a" style="left:974px;top:299px;width:107px;height:19px;overflow:hidden"><div class="c" style="right:7px;top:4px">$163,099</div></div>
<div class="a" style="left:1082px;top:299px;width:74px;height:19px;overflow:hidden"><div class="c" style="right:7px;top:4px">20%</div></div>
<div class="a" style="left:1159px;top:299px;width:87px;height:19px;overflow:hidden"><div class="c" style="left:0;top:4px;">United States</div></div>
<div class="a" style="left:1249px;top:299px;width:92px;height:19px;overflow:hidden"><div class="c" style="left:0;top:4px;">Chicago</div></div>
<div class="a" style="left:26px;top:338px;width:1394px;height:1px;background:#3eaf83"></div>
<div class="a" style="left:28px;top:319px;width:47px;height:19px;overflow:hidden"><div class="c" style="left:0;top:4px;letter-spacing:-0.35px">E02832</div></div>
<div class="a" style="left:78px;top:319px;width:141px;height:19px;overflow:hidden"><div class="c" style="left:0;top:4px;">Penelope Jordan</div></div>
<div class="a" style="left:222px;top:319px;width:191px;height:19px;overflow:hidden"><div class="c" style="left:0;top:4px;">Computer Systems Manager</div></div>
<div class="a" style="left:416px;top:319px;width:115px;height:19px;overflow:hidden"><div class="c" style="left:0;top:4px;">IT</div></div>
<div class="a" style="left:534px;top:319px;width:164px;height:19px;overflow:hidden"><div class="c" style="left:0;top:4px;">Manufacturing</div></div>
<div class="a" style="left:701px;top:319px;width:67px;height:19px;overflow:hidden"><div class="c" style="left:0;top:4px;">Female</div></div>
<div class="a" style="left:771px;top:319px;width:74px;height:19px;overflow:hidden"><div class="c" style="left:0;top:4px;">Caucasian</div></div>
<div class="a" style="left:846px;top:319px;width:46px;height:19px;overflow:hidden"><div class="c" style="right:2px;top:4px">26</div></div>
<div class="a" style="left:893px;top:319px;width:80px;height:19px;overflow:hidden"><div class="c" style="right:2px;top:4px">27/09/2019</div></div>
<div class="a" style="left:974px;top:319px;width:107px;height:19px;overflow:hidden"><div class="c" style="right:7px;top:4px">$84,913</div></div>
<div class="a" style="left:1082px;top:319px;width:74px;height:19px;overflow:hidden"><div class="c" style="right:7px;top:4px">7%</div></div>
<div class="a" style="left:1159px;top:319px;width:87px;height:19px;overflow:hidden"><div class="c" style="left:0;top:4px;">United States</div></div>
<div class="a" style="left:1249px;top:319px;width:92px;height:19px;overflow:hidden"><div class="c" style="left:0;top:4px;">Chicago</div></div>
<div class="a" style="left:26px;top:358px;width:1394px;height:1px;background:#3eaf83"></div>
<div class="a" style="left:28px;top:339px;width:47px;height:19px;overflow:hidden"><div class="c" style="left:0;top:4px;letter-spacing:-0.35px">E01639</div></div>
<div class="a" style="left:78px;top:339px;width:141px;height:19px;overflow:hidden"><div class="c" style="left:0;top:4px;">Austin Vo</div></div>
<div class="a" style="left:222px;top:339px;width:191px;height:19px;overflow:hidden"><div class="c" style="left:0;top:4px;">Sr. Analyst</div></div>
<div class="a" style="left:416px;top:339px;width:115px;height:19px;overflow:hidden"><div class="c" style="left:0;top:4px;">Finance</div></div>
<div class="a" style="left:534px;top:339px;width:164px;height:19px;overflow:hidden"><div class="c" style="left:0;top:4px;">Manufacturing</div></div>
<div class="a" style="left:701px;top:339px;width:67px;height:19px;overflow:hidden"><div class="c" style="left:0;top:4px;">Male</div></div>
<div class="a" style="left:771px;top:339px;width:74px;height:19px;overflow:hidden"><div class="c" style="left:0;top:4px;">Asian</div></div>
<div class="a" style="left:846px;top:339px;width:46px;height:19px;overflow:hidden"><div class="c" style="right:2px;top:4px">55</div></div>
<div class="a" style="left:893px;top:339px;width:80px;height:19px;overflow:hidden"><div class="c" style="right:2px;top:4px">20/11/1995</div></div>
<div class="a" style="left:974px;top:339px;width:107px;height:19px;overflow:hidden"><div class="c" style="right:7px;top:4px">$95,409</div></div>
<div class="a" style="left:1082px;top:339px;width:74px;height:19px;overflow:hidden"><div class="c" style="right:7px;top:4px">0%</div></div>
<div class="a" style="left:1159px;top:339px;width:87px;height:19px;overflow:hidden"><div class="c" style="left:0;top:4px;">United States</div></div>
<div class="a" style="left:1249px;top:339px;width:92px;height:19px;overflow:hidden"><div class="c" style="left:0;top:4px;">Phoenix</div></div>
<div class="a" style="left:26px;top:378px;width:1394px;height:1px;background:#3eaf83"></div>
<div class="a" style="left:28px;top:359px;width:47px;height:19px;overflow:hidden"><div class="c" style="left:0;top:4px;letter-spacing:-0.35px">E00644</div></div>
<div class="a" style="left:78px;top:359px;width:141px;height:19px;overflow:hidden"><div class="c" style="left:0;top:4px;">Joshua Gupta</div></div>
<div class="a" style="left:222px;top:359px;width:191px;height:19px;overflow:hidden"><div class="c" style="left:0;top:4px;">Account Representative</div></div>
<div class="a" style="left:415px;top:360px;width:116px;height:17px;background:#c6c6c6"></div>
<div class="a" style="left:416px;top:359px;width:115px;height:19px;overflow:hidden"><div class="c" style="left:0;top:4px;">Sales</div></div>
<div class="a" style="left:534px;top:359px;width:164px;height:19px;overflow:hidden"><div class="c" style="left:0;top:4px;">Corporate</div></div>
<div class="a" style="left:701px;top:359px;width:67px;height:19px;overflow:hidden"><div class="c" style="left:0;top:4px;">Male</div></div>
<div class="a" style="left:771px;top:359px;width:74px;height:19px;overflow:hidden"><div class="c" style="left:0;top:4px;">Asian</div></div>
<div class="a" style="left:846px;top:359px;width:46px;height:19px;overflow:hidden"><div class="c" style="right:2px;top:4px">57</div></div>
<div class="a" style="left:893px;top:359px;width:80px;height:19px;overflow:hidden"><div class="c" style="right:2px;top:4px">24/01/2017</div></div>
<div class="a" style="left:974px;top:359px;width:107px;height:19px;overflow:hidden"><div class="c" style="right:7px;top:4px">$50,994</div></div>
<div class="a" style="left:1082px;top:359px;width:74px;height:19px;overflow:hidden"><div class="c" style="right:7px;top:4px">0%</div></div>
<div class="a" style="left:1159px;top:359px;width:87px;height:19px;overflow:hidden"><div class="c" style="left:0;top:4px;">China</div></div>
<div class="a" style="left:1249px;top:359px;width:92px;height:19px;overflow:hidden"><div class="c" style="left:0;top:4px;">Chongqing</div></div>
<div class="a" style="left:26px;top:398px;width:1394px;height:1px;background:#3eaf83"></div>
<div class="a" style="left:28px;top:379px;width:47px;height:19px;overflow:hidden"><div class="c" style="left:0;top:4px;letter-spacing:-0.35px">E01550</div></div>
<div class="a" style="left:78px;top:379px;width:141px;height:19px;overflow:hidden"><div class="c" style="left:0;top:4px;">Ruby Barnes</div></div>
<div class="a" style="left:222px;top:379px;width:191px;height:19px;overflow:hidden"><div class="c" style="left:0;top:4px;">Manager</div></div>
<div class="a" style="left:415px;top:380px;width:116px;height:17px;background:#c6c6c6"></div>
<div class="a" style="left:416px;top:379px;width:115px;height:19px;overflow:hidden"><div class="c" style="left:0;top:4px;">IT</div></div>
<div class="a" style="left:534px;top:379px;width:164px;height:19px;overflow:hidden"><div class="c" style="left:0;top:4px;">Corporate</div></div>
<div class="a" style="left:701px;top:379px;width:67px;height:19px;overflow:hidden"><div class="c" style="left:0;top:4px;">Female</div></div>
<div class="a" style="left:771px;top:379px;width:74px;height:19px;overflow:hidden"><div class="c" style="left:0;top:4px;">Caucasian</div></div>
<div class="a" style="left:846px;top:379px;width:46px;height:19px;overflow:hidden"><div class="c" style="right:2px;top:4px">27</div></div>
<div class="a" style="left:893px;top:379px;width:80px;height:19px;overflow:hidden"><div class="c" style="right:2px;top:4px">01/07/2020</div></div>
<div class="a" style="left:974px;top:379px;width:107px;height:19px;overflow:hidden"><div class="c" style="right:7px;top:4px">$119,746</div></div>
<div class="a" style="left:1082px;top:379px;width:74px;height:19px;overflow:hidden"><div class="c" style="right:7px;top:4px">10%</div></div>
<div class="a" style="left:1159px;top:379px;width:87px;height:19px;overflow:hidden"><div class="c" style="left:0;top:4px;">United States</div></div>
<div class="a" style="left:1249px;top:379px;width:92px;height:19px;overflow:hidden"><div class="c" style="left:0;top:4px;">Phoenix</div></div>
<div class="a" style="left:26px;top:418px;width:1394px;height:1px;background:#3eaf83"></div>
<div class="a" style="left:28px;top:399px;width:47px;height:19px;overflow:hidden"><div class="c" style="left:0;top:4px;letter-spacing:-0.35px">E04332</div></div>
<div class="a" style="left:78px;top:399px;width:141px;height:19px;overflow:hidden"><div class="c" style="left:0;top:4px;">Luke Martin</div></div>
<div class="a" style="left:222px;top:399px;width:191px;height:19px;overflow:hidden"><div class="c" style="left:0;top:4px;">Analyst</div></div>
<div class="a" style="left:415px;top:400px;width:116px;height:17px;background:#c6c6c6"></div>
<div class="a" style="left:416px;top:399px;width:115px;height:19px;overflow:hidden"><div class="c" style="left:0;top:4px;">Finance</div></div>
<div class="a" style="left:534px;top:399px;width:164px;height:19px;overflow:hidden"><div class="c" style="left:0;top:4px;">Manufacturing</div></div>
<div class="a" style="left:701px;top:399px;width:67px;height:19px;overflow:hidden"><div class="c" style="left:0;top:4px;">Male</div></div>
<div class="a" style="left:771px;top:399px;width:74px;height:19px;overflow:hidden"><div class="c" style="left:0;top:4px;">Black</div></div>
<div class="a" style="left:846px;top:399px;width:46px;height:19px;overflow:hidden"><div class="c" style="right:2px;top:4px">25</div></div>
<div class="a" style="left:893px;top:399px;width:80px;height:19px;overflow:hidden"><div class="c" style="right:2px;top:4px">16/05/2020</div></div>
<div class="a" style="left:974px;top:399px;width:107px;height:19px;overflow:hidden"><div class="c" style="right:7px;top:4px">$41,336</div></div>
<div class="a" style="left:1082px;top:399px;width:74px;height:19px;overflow:hidden"><div class="c" style="right:7px;top:4px">0%</div></div>
<div class="a" style="left:1159px;top:399px;width:87px;height:19px;overflow:hidden"><div class="c" style="left:0;top:4px;">United States</div></div>
<div class="a" style="left:1249px;top:399px;width:92px;height:19px;overflow:hidden"><div class="c" style="left:0;top:4px;">Miami</div></div>
<div class="a" style="left:1342px;top:399px;width:77px;height:19px;overflow:hidden"><div class="c" style="right:2px;top:4px">20/05/2021</div></div>
<div class="a" style="left:26px;top:438px;width:1394px;height:1px;background:#3eaf83"></div>
<div class="a" style="left:28px;top:419px;width:47px;height:19px;overflow:hidden"><div class="c" style="left:0;top:4px;letter-spacing:-0.35px">E04533</div></div>
<div class="a" style="left:78px;top:419px;width:141px;height:19px;overflow:hidden"><div class="c" style="left:0;top:4px;">Easton Bailey</div></div>
<div class="a" style="left:222px;top:419px;width:191px;height:19px;overflow:hidden"><div class="c" style="left:0;top:4px;">Manager</div></div>
<div class="a" style="left:416px;top:419px;width:115px;height:19px;overflow:hidden"><div class="c" style="left:0;top:4px;">Accounting</div></div>
<div class="a" style="left:534px;top:419px;width:164px;height:19px;overflow:hidden"><div class="c" style="left:0;top:4px;">Manufacturing</div></div>
<div class="a" style="left:701px;top:419px;width:67px;height:19px;overflow:hidden"><div class="c" style="left:0;top:4px;">Male</div></div>
<div class="a" style="left:771px;top:419px;width:74px;height:19px;overflow:hidden"><div class="c" style="left:0;top:4px;">Caucasian</div></div>
<div class="a" style="left:846px;top:419px;width:46px;height:19px;overflow:hidden"><div class="c" style="right:2px;top:4px">29</div></div>
<div class="a" style="left:893px;top:419px;width:80px;height:19px;overflow:hidden"><div class="c" style="right:2px;top:4px">25/01/2019</div></div>
<div class="a" style="left:974px;top:419px;width:107px;height:19px;overflow:hidden"><div class="c" style="right:7px;top:4px">$113,527</div></div>
<div class="a" style="left:1082px;top:419px;width:74px;height:19px;overflow:hidden"><div class="c" style="right:7px;top:4px">6%</div></div>
<div class="a" style="left:1159px;top:419px;width:87px;height:19px;overflow:hidden"><div class="c" style="left:0;top:4px;">United States</div></div>
<div class="a" style="left:1249px;top:419px;width:92px;height:19px;overflow:hidden"><div class="c" style="left:0;top:4px;">Austin</div></div>
<div class="a" style="left:26px;top:458px;width:1394px;height:1px;background:#3eaf83"></div>
<div class="a" style="left:28px;top:439px;width:47px;height:19px;overflow:hidden"><div class="c" style="left:0;top:4px;letter-spacing:-0.35px">E03838</div></div>
<div class="a" style="left:78px;top:439px;width:141px;height:19px;overflow:hidden"><div class="c" style="left:0;top:4px;">Madeline Walker</div></div>
<div class="a" style="left:222px;top:439px;width:191px;height:19px;overflow:hidden"><div class="c" style="left:0;top:4px;">Sr. Analyst</div></div>
<div class="a" style="left:416px;top:439px;width:115px;height:19px;overflow:hidden"><div class="c" style="left:0;top:4px;">Finance</div></div>
<div class="a" style="left:534px;top:439px;width:164px;height:19px;overflow:hidden"><div class="c" style="left:0;top:4px;">Speciality Products</div></div>
<div class="a" style="left:701px;top:439px;width:67px;height:19px;overflow:hidden"><div class="c" style="left:0;top:4px;">Female</div></div>
<div class="a" style="left:771px;top:439px;width:74px;height:19px;overflow:hidden"><div class="c" style="left:0;top:4px;">Caucasian</div></div>
<div class="a" style="left:846px;top:439px;width:46px;height:19px;overflow:hidden"><div class="c" style="right:2px;top:4px">34</div></div>
<div class="a" style="left:893px;top:439px;width:80px;height:19px;overflow:hidden"><div class="c" style="right:2px;top:4px">13/06/2018</div></div>
<div class="a" style="left:974px;top:439px;width:107px;height:19px;overflow:hidden"><div class="c" style="right:7px;top:4px">$77,203</div></div>
<div class="a" style="left:1082px;top:439px;width:74px;height:19px;overflow:hidden"><div class="c" style="right:7px;top:4px">0%</div></div>
<div class="a" style="left:1159px;top:439px;width:87px;height:19px;overflow:hidden"><div class="c" style="left:0;top:4px;">United States</div></div>
<div class="a" style="left:1249px;top:439px;width:92px;height:19px;overflow:hidden"><div class="c" style="left:0;top:4px;">Chicago</div></div>
<div class="a" style="left:26px;top:478px;width:1394px;height:1px;background:#3eaf83"></div>
<div class="a" style="left:28px;top:459px;width:47px;height:19px;overflow:hidden"><div class="c" style="left:0;top:4px;letter-spacing:-0.35px">E00591</div></div>
<div class="a" style="left:78px;top:459px;width:141px;height:19px;overflow:hidden"><div class="c" style="left:0;top:4px;">Savannah Ali</div></div>
<div class="a" style="left:222px;top:459px;width:191px;height:19px;overflow:hidden"><div class="c" style="left:0;top:4px;">Sr. Manger</div></div>
<div class="a" style="left:416px;top:459px;width:115px;height:19px;overflow:hidden"><div class="c" style="left:0;top:4px;">Human Resources</div></div>
<div class="a" style="left:534px;top:459px;width:164px;height:19px;overflow:hidden"><div class="c" style="left:0;top:4px;">Manufacturing</div></div>
<div class="a" style="left:701px;top:459px;width:67px;height:19px;overflow:hidden"><div class="c" style="left:0;top:4px;">Female</div></div>
<div class="a" style="left:771px;top:459px;width:74px;height:19px;overflow:hidden"><div class="c" style="left:0;top:4px;">Asian</div></div>
<div class="a" style="left:846px;top:459px;width:46px;height:19px;overflow:hidden"><div class="c" style="right:2px;top:4px">36</div></div>
<div class="a" style="left:893px;top:459px;width:80px;height:19px;overflow:hidden"><div class="c" style="right:2px;top:4px">11/02/2009</div></div>
<div class="a" style="left:974px;top:459px;width:107px;height:19px;overflow:hidden"><div class="c" style="right:7px;top:4px">$157,333</div></div>
<div class="a" style="left:1082px;top:459px;width:74px;height:19px;overflow:hidden"><div class="c" style="right:7px;top:4px">15%</div></div>
<div class="a" style="left:1159px;top:459px;width:87px;height:19px;overflow:hidden"><div class="c" style="left:0;top:4px;">United States</div></div>
<div class="a" style="left:1249px;top:459px;width:92px;height:19px;overflow:hidden"><div class="c" style="left:0;top:4px;">Miami</div></div>
<div class="a" style="left:26px;top:498px;width:1394px;height:1px;background:#3eaf83"></div>
<div class="a" style="left:28px;top:479px;width:47px;height:19px;overflow:hidden"><div class="c" style="left:0;top:4px;letter-spacing:-0.35px">E03344</div></div>
<div class="a" style="left:78px;top:479px;width:141px;height:19px;overflow:hidden"><div class="c" style="left:0;top:4px;">Camila Rogers</div></div>
<div class="a" style="left:222px;top:479px;width:191px;height:19px;overflow:hidden"><div class="c" style="left:0;top:4px;">Controls Engineer</div></div>
<div class="a" style="left:415px;top:480px;width:116px;height:17px;background:#c6c6c6"></div>
<div class="a" style="left:416px;top:479px;width:115px;height:19px;overflow:hidden"><div class="c" style="left:0;top:4px;">Engineering</div></div>
<div class="a" style="left:534px;top:479px;width:164px;height:19px;overflow:hidden"><div class="c" style="left:0;top:4px;">Speciality Products</div></div>
<div class="a" style="left:701px;top:479px;width:67px;height:19px;overflow:hidden"><div class="c" style="left:0;top:4px;">Female</div></div>
<div class="a" style="left:771px;top:479px;width:74px;height:19px;overflow:hidden"><div class="c" style="left:0;top:4px;">Caucasian</div></div>
<div class="a" style="left:846px;top:479px;width:46px;height:19px;overflow:hidden"><div class="c" style="right:2px;top:4px">27</div></div>
<div class="a" style="left:893px;top:479px;width:80px;height:19px;overflow:hidden"><div class="c" style="right:2px;top:4px">21/10/2021</div></div>
<div class="a" style="left:974px;top:479px;width:107px;height:19px;overflow:hidden"><div class="c" style="right:7px;top:4px">$109,851</div></div>
<div class="a" style="left:1082px;top:479px;width:74px;height:19px;overflow:hidden"><div class="c" style="right:7px;top:4px">0%</div></div>
<div class="a" style="left:1159px;top:479px;width:87px;height:19px;overflow:hidden"><div class="c" style="left:0;top:4px;">United States</div></div>
<div class="a" style="left:1249px;top:479px;width:92px;height:19px;overflow:hidden"><div class="c" style="left:0;top:4px;">Seattle</div></div>
<div class="a" style="left:26px;top:518px;width:1394px;height:1px;background:#3eaf83"></div>
<div class="a" style="left:28px;top:499px;width:47px;height:19px;overflow:hidden"><div class="c" style="left:0;top:4px;letter-spacing:-0.35px">E00530</div></div>
<div class="a" style="left:78px;top:499px;width:141px;height:19px;overflow:hidden"><div class="c" style="left:0;top:4px;">Eli Jones</div></div>
<div class="a" style="left:222px;top:499px;width:191px;height:19px;overflow:hidden"><div class="c" style="left:0;top:4px;">Manager</div></div>
<div class="a" style="left:416px;top:499px;width:115px;height:19px;overflow:hidden"><div class="c" style="left:0;top:4px;">Human Resources</div></div>
<div class="a" style="left:534px;top:499px;width:164px;height:19px;overflow:hidden"><div class="c" style="left:0;top:4px;">Manufacturing</div></div>
<div class="a" style="left:701px;top:499px;width:67px;height:19px;overflow:hidden"><div class="c" style="left:0;top:4px;">Male</div></div>
<div class="a" style="left:771px;top:499px;width:74px;height:19px;overflow:hidden"><div class="c" style="left:0;top:4px;">Caucasian</div></div>
<div class="a" style="left:846px;top:499px;width:46px;height:19px;overflow:hidden"><div class="c" style="right:2px;top:4px">59</div></div>
<div class="a" style="left:893px;top:499px;width:80px;height:19px;overflow:hidden"><div class="c" style="right:2px;top:4px">14/03/1999</div></div>
<div class="a" style="left:974px;top:499px;width:107px;height:19px;overflow:hidden"><div class="c" style="right:7px;top:4px">$105,086</div></div>
<div class="a" style="left:1082px;top:499px;width:74px;height:19px;overflow:hidden"><div class="c" style="right:7px;top:4px">9%</div></div>
<div class="a" style="left:1159px;top:499px;width:87px;height:19px;overflow:hidden"><div class="c" style="left:0;top:4px;">United States</div></div>
<div class="a" style="left:1249px;top:499px;width:92px;height:19px;overflow:hidden"><div class="c" style="left:0;top:4px;">Austin</div></div>
<div class="a" style="left:26px;top:538px;width:1394px;height:1px;background:#3eaf83"></div>
<div class="a" style="left:28px;top:519px;width:47px;height:19px;overflow:hidden"><div class="c" style="left:0;top:4px;letter-spacing:-0.35px">E04239</div></div>
<div class="a" style="left:78px;top:519px;width:141px;height:19px;overflow:hidden"><div class="c" style="left:0;top:4px;">Everleigh Ng</div></div>
<div class="a" style="left:222px;top:519px;width:191px;height:19px;overflow:hidden"><div class="c" style="left:0;top:4px;">Sr. Manger</div></div>
<div class="a" style="left:415px;top:520px;width:116px;height:17px;background:#c6c6c6"></div>
<div class="a" style="left:416px;top:519px;width:115px;height:19px;overflow:hidden"><div class="c" style="left:0;top:4px;">Finance</div></div>
<div class="a" style="left:534px;top:519px;width:164px;height:19px;overflow:hidden"><div class="c" style="left:0;top:4px;">Research &amp; Development</div></div>
<div class="a" style="left:701px;top:519px;width:67px;height:19px;overflow:hidden"><div class="c" style="left:0;top:4px;">Female</div></div>
<div class="a" style="left:771px;top:519px;width:74px;height:19px;overflow:hidden"><div class="c" style="left:0;top:4px;">Asian</div></div>
<div class="a" style="left:846px;top:519px;width:46px;height:19px;overflow:hidden"><div class="c" style="right:2px;top:4px">51</div></div>
<div class="a" style="left:893px;top:519px;width:80px;height:19px;overflow:hidden"><div class="c" style="right:2px;top:4px">10/06/2021</div></div>
<div class="a" style="left:974px;top:519px;width:107px;height:19px;overflow:hidden"><div class="c" style="right:7px;top:4px">$146,742</div></div>
<div class="a" style="left:1082px;top:519px;width:74px;height:19px;overflow:hidden"><div class="c" style="right:7px;top:4px">10%</div></div>
<div class="a" style="left:1159px;top:519px;width:87px;height:19px;overflow:hidden"><div class="c" style="left:0;top:4px;">China</div></div>
<div class="a" style="left:1249px;top:519px;width:92px;height:19px;overflow:hidden"><div class="c" style="left:0;top:4px;">Shanghai</div></div>
<div class="a" style="left:26px;top:558px;width:1394px;height:1px;background:#3eaf83"></div>
<div class="a" style="left:28px;top:539px;width:47px;height:19px;overflow:hidden"><div class="c" style="left:0;top:4px;letter-spacing:-0.35px">E03496</div></div>
<div class="a" style="left:78px;top:539px;width:141px;height:19px;overflow:hidden"><div class="c" style="left:0;top:4px;">Robert Yang</div></div>
<div class="a" style="left:222px;top:539px;width:191px;height:19px;overflow:hidden"><div class="c" style="left:0;top:4px;">Sr. Analyst</div></div>
<div class="a" style="left:416px;top:539px;width:115px;height:19px;overflow:hidden"><div class="c" style="left:0;top:4px;">Accounting</div></div>
<div class="a" style="left:534px;top:539px;width:164px;height:19px;overflow:hidden"><div class="c" style="left:0;top:4px;">Speciality Products</div></div>
<div class="a" style="left:701px;top:539px;width:67px;height:19px;overflow:hidden"><div class="c" style="left:0;top:4px;">Male</div></div>
<div class="a" style="left:771px;top:539px;width:74px;height:19px;overflow:hidden"><div class="c" style="left:0;top:4px;">Asian</div></div>
<div class="a" style="left:846px;top:539px;width:46px;height:19px;overflow:hidden"><div class="c" style="right:2px;top:4px">31</div></div>
<div class="a" style="left:893px;top:539px;width:80px;height:19px;overflow:hidden"><div class="c" style="right:2px;top:4px">04/11/2017</div></div>
<div class="a" style="left:974px;top:539px;width:107px;height:19px;overflow:hidden"><div class="c" style="right:7px;top:4px">$97,078</div></div>
<div class="a" style="left:1082px;top:539px;width:74px;height:19px;overflow:hidden"><div class="c" style="right:7px;top:4px">0%</div></div>
<div class="a" style="left:1159px;top:539px;width:87px;height:19px;overflow:hidden"><div class="c" style="left:0;top:4px;">United States</div></div>
<div class="a" style="left:1249px;top:539px;width:92px;height:19px;overflow:hidden"><div class="c" style="left:0;top:4px;">Austin</div></div>
<div class="a" style="left:1342px;top:539px;width:77px;height:19px;overflow:hidden"><div class="c" style="right:2px;top:4px">09/03/2020</div></div>
<div class="a" style="left:26px;top:578px;width:1394px;height:1px;background:#3eaf83"></div>
<div class="a" style="left:28px;top:559px;width:47px;height:19px;overflow:hidden"><div class="c" style="left:0;top:4px;letter-spacing:-0.35px">E00549</div></div>
<div class="a" style="left:78px;top:559px;width:141px;height:19px;overflow:hidden"><div class="c" style="left:0;top:4px;">Isabella Xi</div></div>
<div class="a" style="left:222px;top:559px;width:191px;height:19px;overflow:hidden"><div class="c" style="left:0;top:4px;">Vice President</div></div>
<div class="a" style="left:416px;top:559px;width:115px;height:19px;overflow:hidden"><div class="c" style="left:0;top:4px;">Marketing</div></div>
<div class="a" style="left:534px;top:559px;width:164px;height:19px;overflow:hidden"><div class="c" style="left:0;top:4px;">Research &amp; Development</div></div>
<div class="a" style="left:701px;top:559px;width:67px;height:19px;overflow:hidden"><div class="c" style="left:0;top:4px;">Female</div></div>
<div class="a" style="left:771px;top:559px;width:74px;height:19px;overflow:hidden"><div class="c" style="left:0;top:4px;">Asian</div></div>
<div class="a" style="left:846px;top:559px;width:46px;height:19px;overflow:hidden"><div class="c" style="right:2px;top:4px">41</div></div>
<div class="a" style="left:893px;top:559px;width:80px;height:19px;overflow:hidden"><div class="c" style="right:2px;top:4px">13/03/2013</div></div>
<div class="a" style="left:974px;top:559px;width:107px;height:19px;overflow:hidden"><div class="c" style="right:7px;top:4px">$249,270</div></div>
<div class="a" style="left:1082px;top:559px;width:74px;height:19px;overflow:hidden"><div class="c" style="right:7px;top:4px">30%</div></div>
<div class="a" style="left:1159px;top:559px;width:87px;height:19px;overflow:hidden"><div class="c" style="left:0;top:4px;">United States</div></div>
<div class="a" style="left:1249px;top:559px;width:92px;height:19px;overflow:hidden"><div class="c" style="left:0;top:4px;">Seattle</div></div>
<div class="a" style="left:26px;top:598px;width:1394px;height:1px;background:#3eaf83"></div>
<div class="a" style="left:28px;top:579px;width:47px;height:19px;overflow:hidden"><div class="c" style="left:0;top:4px;letter-spacing:-0.35px">E00163</div></div>
<div class="a" style="left:78px;top:579px;width:141px;height:19px;overflow:hidden"><div class="c" style="left:0;top:4px;">Bella Powell</div></div>
<div class="a" style="left:222px;top:579px;width:191px;height:19px;overflow:hidden"><div class="c" style="left:0;top:4px;">Director</div></div>
<div class="a" style="left:416px;top:579px;width:115px;height:19px;overflow:hidden"><div class="c" style="left:0;top:4px;">Finance</div></div>
<div class="a" style="left:534px;top:579px;width:164px;height:19px;overflow:hidden"><div class="c" style="left:0;top:4px;">Research &amp; Development</div></div>
<div class="a" style="left:701px;top:579px;width:67px;height:19px;overflow:hidden"><div class="c" style="left:0;top:4px;">Female</div></div>
<div class="a" style="left:771px;top:579px;width:74px;height:19px;overflow:hidden"><div class="c" style="left:0;top:4px;">Black</div></div>
<div class="a" style="left:846px;top:579px;width:46px;height:19px;overflow:hidden"><div class="c" style="right:2px;top:4px">65</div></div>
<div class="a" style="left:893px;top:579px;width:80px;height:19px;overflow:hidden"><div class="c" style="right:2px;top:4px">04/03/2002</div></div>
<div class="a" style="left:974px;top:579px;width:107px;height:19px;overflow:hidden"><div class="c" style="right:7px;top:4px">$175,837</div></div>
<div class="a" style="left:1082px;top:579px;width:74px;height:19px;overflow:hidden"><div class="c" style="right:7px;top:4px">20%</div></div>
<div class="a" style="left:1159px;top:579px;width:87px;height:19px;overflow:hidden"><div class="c" style="left:0;top:4px;">United States</div></div>
<div class="a" style="left:1249px;top:579px;width:92px;height:19px;overflow:hidden"><div class="c" style="left:0;top:4px;">Phoenix</div></div>
<div class="a" style="left:26px;top:618px;width:1394px;height:1px;background:#3eaf83"></div>
<div class="a" style="left:28px;top:599px;width:47px;height:19px;overflow:hidden"><div class="c" style="left:0;top:4px;letter-spacing:-0.35px">E00884</div></div>
<div class="a" style="left:78px;top:599px;width:141px;height:19px;overflow:hidden"><div class="c" style="left:0;top:4px;">Camila Silva</div></div>
<div class="a" style="left:222px;top:599px;width:191px;height:19px;overflow:hidden"><div class="c" style="left:0;top:4px;">Sr. Manger</div></div>
<div class="a" style="left:416px;top:599px;width:115px;height:19px;overflow:hidden"><div class="c" style="left:0;top:4px;">Marketing</div></div>
<div class="a" style="left:534px;top:599px;width:164px;height:19px;overflow:hidden"><div class="c" style="left:0;top:4px;">Speciality Products</div></div>
<div class="a" style="left:701px;top:599px;width:67px;height:19px;overflow:hidden"><div class="c" style="left:0;top:4px;">Female</div></div>
<div class="a" style="left:771px;top:599px;width:74px;height:19px;overflow:hidden"><div class="c" style="left:0;top:4px;">Latino</div></div>
<div class="a" style="left:846px;top:599px;width:46px;height:19px;overflow:hidden"><div class="c" style="right:2px;top:4px">64</div></div>
<div class="a" style="left:893px;top:599px;width:80px;height:19px;overflow:hidden"><div class="c" style="right:2px;top:4px">01/12/2003</div></div>
<div class="a" style="left:974px;top:599px;width:107px;height:19px;overflow:hidden"><div class="c" style="right:7px;top:4px">$154,828</div></div>
<div class="a" style="left:1082px;top:599px;width:74px;height:19px;overflow:hidden"><div class="c" style="right:7px;top:4px">13%</div></div>
<div class="a" style="left:1159px;top:599px;width:87px;height:19px;overflow:hidden"><div class="c" style="left:0;top:4px;">United States</div></div>
<div class="a" style="left:1249px;top:599px;width:92px;height:19px;overflow:hidden"><div class="c" style="left:0;top:4px;">Seattle</div></div>
<div class="a" style="left:26px;top:638px;width:1394px;height:1px;background:#3eaf83"></div>
<div class="a" style="left:28px;top:619px;width:47px;height:19px;overflow:hidden"><div class="c" style="left:0;top:4px;letter-spacing:-0.35px">E04116</div></div>
<div class="a" style="left:78px;top:619px;width:141px;height:19px;overflow:hidden"><div class="c" style="left:0;top:4px;">David Barnes</div></div>
<div class="a" style="left:222px;top:619px;width:191px;height:19px;overflow:hidden"><div class="c" style="left:0;top:4px;">Director</div></div>
<div class="a" style="left:416px;top:619px;width:115px;height:19px;overflow:hidden"><div class="c" style="left:0;top:4px;">IT</div></div>
<div class="a" style="left:534px;top:619px;width:164px;height:19px;overflow:hidden"><div class="c" style="left:0;top:4px;">Corporate</div></div>
<div class="a" style="left:701px;top:619px;width:67px;height:19px;overflow:hidden"><div class="c" style="left:0;top:4px;">Male</div></div>
<div class="a" style="left:771px;top:619px;width:74px;height:19px;overflow:hidden"><div class="c" style="left:0;top:4px;">Caucasian</div></div>
<div class="a" style="left:846px;top:619px;width:46px;height:19px;overflow:hidden"><div class="c" style="right:2px;top:4px">64</div></div>
<div class="a" style="left:893px;top:619px;width:80px;height:19px;overflow:hidden"><div class="c" style="right:2px;top:4px">03/11/2013</div></div>
<div class="a" style="left:974px;top:619px;width:107px;height:19px;overflow:hidden"><div class="c" style="right:7px;top:4px">$186,503</div></div>
<div class="a" style="left:1082px;top:619px;width:74px;height:19px;overflow:hidden"><div class="c" style="right:7px;top:4px">24%</div></div>
<div class="a" style="left:1159px;top:619px;width:87px;height:19px;overflow:hidden"><div class="c" style="left:0;top:4px;">United States</div></div>
<div class="a" style="left:1249px;top:619px;width:92px;height:19px;overflow:hidden"><div class="c" style="left:0;top:4px;">Columbus</div></div>
<div class="a" style="left:26px;top:658px;width:1394px;height:1px;background:#3eaf83"></div>
<div class="a" style="left:28px;top:639px;width:47px;height:19px;overflow:hidden"><div class="c" style="left:0;top:4px;letter-spacing:-0.35px">E04625</div></div>
<div class="a" style="left:78px;top:639px;width:141px;height:19px;overflow:hidden"><div class="c" style="left:0;top:4px;">Adam Dang</div></div>
<div class="a" style="left:222px;top:639px;width:191px;height:19px;overflow:hidden"><div class="c" style="left:0;top:4px;">Director</div></div>
<div class="a" style="left:416px;top:639px;width:115px;height:19px;overflow:hidden"><div class="c" style="left:0;top:4px;">Sales</div></div>
<div class="a" style="left:534px;top:639px;width:164px;height:19px;overflow:hidden"><div class="c" style="left:0;top:4px;">Speciality Products</div></div>
<div class="a" style="left:701px;top:639px;width:67px;height:19px;overflow:hidden"><div class="c" style="left:0;top:4px;">Male</div></div>
<div class="a" style="left:771px;top:639px;width:74px;height:19px;overflow:hidden"><div class="c" style="left:0;top:4px;">Asian</div></div>
<div class="a" style="left:846px;top:639px;width:46px;height:19px;overflow:hidden"><div class="c" style="right:2px;top:4px">45</div></div>
<div class="a" style="left:893px;top:639px;width:80px;height:19px;overflow:hidden"><div class="c" style="right:2px;top:4px">09/07/2002</div></div>
<div class="a" style="left:974px;top:639px;width:107px;height:19px;overflow:hidden"><div class="c" style="right:7px;top:4px">$166,331</div></div>
<div class="a" style="left:1082px;top:639px;width:74px;height:19px;overflow:hidden"><div class="c" style="right:7px;top:4px">18%</div></div>
<div class="a" style="left:1159px;top:639px;width:87px;height:19px;overflow:hidden"><div class="c" style="left:0;top:4px;">China</div></div>
<div class="a" style="left:1249px;top:639px;width:92px;height:19px;overflow:hidden"><div class="c" style="left:0;top:4px;">Chongqing</div></div>
<div class="a" style="left:26px;top:678px;width:1394px;height:1px;background:#3eaf83"></div>
<div class="a" style="left:28px;top:659px;width:47px;height:19px;overflow:hidden"><div class="c" style="left:0;top:4px;letter-spacing:-0.35px">E03680</div></div>
<div class="a" style="left:78px;top:659px;width:141px;height:19px;overflow:hidden"><div class="c" style="left:0;top:4px;">Elias Alvarado</div></div>
<div class="a" style="left:222px;top:659px;width:191px;height:19px;overflow:hidden"><div class="c" style="left:0;top:4px;">Sr. Manger</div></div>
<div class="a" style="left:416px;top:659px;width:115px;height:19px;overflow:hidden"><div class="c" style="left:0;top:4px;">IT</div></div>
<div class="a" style="left:534px;top:659px;width:164px;height:19px;overflow:hidden"><div class="c" style="left:0;top:4px;">Manufacturing</div></div>
<div class="a" style="left:701px;top:659px;width:67px;height:19px;overflow:hidden"><div class="c" style="left:0;top:4px;">Male</div></div>
<div class="a" style="left:771px;top:659px;width:74px;height:19px;overflow:hidden"><div class="c" style="left:0;top:4px;">Latino</div></div>
<div class="a" style="left:846px;top:659px;width:46px;height:19px;overflow:hidden"><div class="c" style="right:2px;top:4px">56</div></div>
<div class="a" style="left:893px;top:659px;width:80px;height:19px;overflow:hidden"><div class="c" style="right:2px;top:4px">09/01/2012</div></div>
<div class="a" style="left:974px;top:659px;width:107px;height:19px;overflow:hidden"><div class="c" style="right:7px;top:4px">$146,140</div></div>
<div class="a" style="left:1082px;top:659px;width:74px;height:19px;overflow:hidden"><div class="c" style="right:7px;top:4px">10%</div></div>
<div class="a" style="left:1159px;top:659px;width:87px;height:19px;overflow:hidden"><div class="c" style="left:0;top:4px;">Brazil</div></div>
<div class="a" style="left:1249px;top:659px;width:92px;height:19px;overflow:hidden"><div class="c" style="left:0;top:4px;">Manaus</div></div>
<div class="a" style="left:26px;top:698px;width:1394px;height:1px;background:#3eaf83"></div>
<div class="a" style="left:28px;top:679px;width:47px;height:19px;overflow:hidden"><div class="c" style="left:0;top:4px;letter-spacing:-0.35px">E04732</div></div>
<div class="a" style="left:78px;top:679px;width:141px;height:19px;overflow:hidden"><div class="c" style="left:0;top:4px;">Eva Rivera</div></div>
<div class="a" style="left:222px;top:679px;width:191px;height:19px;overflow:hidden"><div class="c" style="left:0;top:4px;">Director</div></div>
<div class="a" style="left:416px;top:679px;width:115px;height:19px;overflow:hidden"><div class="c" style="left:0;top:4px;">Sales</div></div>
<div class="a" style="left:534px;top:679px;width:164px;height:19px;overflow:hidden"><div class="c" style="left:0;top:4px;">Manufacturing</div></div>
<div class="a" style="left:701px;top:679px;width:67px;height:19px;overflow:hidden"><div class="c" style="left:0;top:4px;">Female</div></div>
<div class="a" style="left:771px;top:679px;width:74px;height:19px;overflow:hidden"><div class="c" style="left:0;top:4px;">Latino</div></div>
<div class="a" style="left:846px;top:679px;width:46px;height:19px;overflow:hidden"><div class="c" style="right:2px;top:4px">36</div></div>
<div class="a" style="left:893px;top:679px;width:80px;height:19px;overflow:hidden"><div class="c" style="right:2px;top:4px">02/04/2021</div></div>
<div class="a" style="left:974px;top:679px;width:107px;height:19px;overflow:hidden"><div class="c" style="right:7px;top:4px">$151,703</div></div>
<div class="a" style="left:1082px;top:679px;width:74px;height:19px;overflow:hidden"><div class="c" style="right:7px;top:4px">21%</div></div>
<div class="a" style="left:1159px;top:679px;width:87px;height:19px;overflow:hidden"><div class="c" style="left:0;top:4px;">United States</div></div>
<div class="a" style="left:1249px;top:679px;width:92px;height:19px;overflow:hidden"><div class="c" style="left:0;top:4px;">Miami</div></div>
<div class="a" style="left:26px;top:718px;width:1394px;height:1px;background:#3eaf83"></div>
<div class="a" style="left:28px;top:699px;width:47px;height:19px;overflow:hidden"><div class="c" style="left:0;top:4px;letter-spacing:-0.35px">E03484</div></div>
<div class="a" style="left:78px;top:699px;width:141px;height:19px;overflow:hidden"><div class="c" style="left:0;top:4px;">Logan Rivera</div></div>
<div class="a" style="left:222px;top:699px;width:191px;height:19px;overflow:hidden"><div class="c" style="left:0;top:4px;">Director</div></div>
<div class="a" style="left:416px;top:699px;width:115px;height:19px;overflow:hidden"><div class="c" style="left:0;top:4px;">IT</div></div>
<div class="a" style="left:534px;top:699px;width:164px;height:19px;overflow:hidden"><div class="c" style="left:0;top:4px;">Research &amp; Development</div></div>
<div class="a" style="left:701px;top:699px;width:67px;height:19px;overflow:hidden"><div class="c" style="left:0;top:4px;">Male</div></div>
<div class="a" style="left:771px;top:699px;width:74px;height:19px;overflow:hidden"><div class="c" style="left:0;top:4px;">Latino</div></div>
<div class="a" style="left:846px;top:699px;width:46px;height:19px;overflow:hidden"><div class="c" style="right:2px;top:4px">59</div></div>
<div class="a" style="left:893px;top:699px;width:80px;height:19px;overflow:hidden"><div class="c" style="right:2px;top:4px">24/05/2002</div></div>
<div class="a" style="left:974px;top:699px;width:107px;height:19px;overflow:hidden"><div class="c" style="right:7px;top:4px">$172,787</div></div>
<div class="a" style="left:1082px;top:699px;width:74px;height:19px;overflow:hidden"><div class="c" style="right:7px;top:4px">28%</div></div>
<div class="a" style="left:1159px;top:699px;width:87px;height:19px;overflow:hidden"><div class="c" style="left:0;top:4px;">Brazil</div></div>
<div class="a" style="left:1249px;top:699px;width:92px;height:19px;overflow:hidden"><div class="c" style="left:0;top:4px;">Rio de Janerio</div></div>
<div class="a" style="left:26px;top:738px;width:1394px;height:1px;background:#3eaf83"></div>
<div class="a" style="left:28px;top:719px;width:47px;height:19px;overflow:hidden"><div class="c" style="left:0;top:4px;letter-spacing:-0.35px">E00671</div></div>
<div class="a" style="left:78px;top:719px;width:141px;height:19px;overflow:hidden"><div class="c" style="left:0;top:4px;">Leonardo Dixon</div></div>
<div class="a" style="left:222px;top:719px;width:191px;height:19px;overflow:hidden"><div class="c" style="left:0;top:4px;">Analyst</div></div>
<div class="a" style="left:416px;top:719px;width:115px;height:19px;overflow:hidden"><div class="c" style="left:0;top:4px;">Sales</div></div>
<div class="a" style="left:534px;top:719px;width:164px;height:19px;overflow:hidden"><div class="c" style="left:0;top:4px;">Speciality Products</div></div>
<div class="a" style="left:701px;top:719px;width:67px;height:19px;overflow:hidden"><div class="c" style="left:0;top:4px;">Male</div></div>
<div class="a" style="left:771px;top:719px;width:74px;height:19px;overflow:hidden"><div class="c" style="left:0;top:4px;">Caucasian</div></div>
<div class="a" style="left:846px;top:719px;width:46px;height:19px;overflow:hidden"><div class="c" style="right:2px;top:4px">37</div></div>
<div class="a" style="left:893px;top:719px;width:80px;height:19px;overflow:hidden"><div class="c" style="right:2px;top:4px">05/09/2019</div></div>
<div class="a" style="left:974px;top:719px;width:107px;height:19px;overflow:hidden"><div class="c" style="right:7px;top:4px">$49,998</div></div>
<div class="a" style="left:1082px;top:719px;width:74px;height:19px;overflow:hidden"><div class="c" style="right:7px;top:4px">0%</div></div>
<div class="a" style="left:1159px;top:719px;width:87px;height:19px;overflow:hidden"><div class="c" style="left:0;top:4px;">United States</div></div>
<div class="a" style="left:1249px;top:719px;width:92px;height:19px;overflow:hidden"><div class="c" style="left:0;top:4px;">Seattle</div></div>
<div class="a" style="left:26px;top:758px;width:1394px;height:1px;background:#3eaf83"></div>
<div class="a" style="left:28px;top:739px;width:47px;height:19px;overflow:hidden"><div class="c" style="left:0;top:4px;letter-spacing:-0.35px">E02071</div></div>
<div class="a" style="left:78px;top:739px;width:141px;height:19px;overflow:hidden"><div class="c" style="left:0;top:4px;">Mateo Her</div></div>
<div class="a" style="left:222px;top:739px;width:191px;height:19px;overflow:hidden"><div class="c" style="left:0;top:4px;">Vice President</div></div>
<div class="a" style="left:416px;top:739px;width:115px;height:19px;overflow:hidden"><div class="c" style="left:0;top:4px;">Sales</div></div>
<div class="a" style="left:534px;top:739px;width:164px;height:19px;overflow:hidden"><div class="c" style="left:0;top:4px;">Corporate</div></div>
<div class="a" style="left:701px;top:739px;width:67px;height:19px;overflow:hidden"><div class="c" style="left:0;top:4px;">Male</div></div>
<div class="a" style="left:771px;top:739px;width:74px;height:19px;overflow:hidden"><div class="c" style="left:0;top:4px;">Asian</div></div>
<div class="a" style="left:846px;top:739px;width:46px;height:19px;overflow:hidden"><div class="c" style="right:2px;top:4px">44</div></div>
<div class="a" style="left:893px;top:739px;width:80px;height:19px;overflow:hidden"><div class="c" style="right:2px;top:4px">02/03/2014</div></div>
<div class="a" style="left:974px;top:739px;width:107px;height:19px;overflow:hidden"><div class="c" style="right:7px;top:4px">$207,172</div></div>
<div class="a" style="left:1082px;top:739px;width:74px;height:19px;overflow:hidden"><div class="c" style="right:7px;top:4px">31%</div></div>
<div class="a" style="left:1159px;top:739px;width:87px;height:19px;overflow:hidden"><div class="c" style="left:0;top:4px;">China</div></div>
<div class="a" style="left:1249px;top:739px;width:92px;height:19px;overflow:hidden"><div class="c" style="left:0;top:4px;">Chongqing</div></div>
<div class="a" style="left:26px;top:778px;width:1394px;height:1px;background:#3eaf83"></div>
<div class="a" style="left:28px;top:759px;width:47px;height:19px;overflow:hidden"><div class="c" style="left:0;top:4px;letter-spacing:-0.35px">E02206</div></div>
<div class="a" style="left:78px;top:759px;width:141px;height:19px;overflow:hidden"><div class="c" style="left:0;top:4px;">Jose Henderson</div></div>
<div class="a" style="left:222px;top:759px;width:191px;height:19px;overflow:hidden"><div class="c" style="left:0;top:4px;">Director</div></div>
<div class="a" style="left:416px;top:759px;width:115px;height:19px;overflow:hidden"><div class="c" style="left:0;top:4px;">Human Resources</div></div>
<div class="a" style="left:534px;top:759px;width:164px;height:19px;overflow:hidden"><div class="c" style="left:0;top:4px;">Speciality Products</div></div>
<div class="a" style="left:701px;top:759px;width:67px;height:19px;overflow:hidden"><div class="c" style="left:0;top:4px;">Male</div></div>
<div class="a" style="left:771px;top:759px;width:74px;height:19px;overflow:hidden"><div class="c" style="left:0;top:4px;">Black</div></div>
<div class="a" style="left:846px;top:759px;width:46px;height:19px;overflow:hidden"><div class="c" style="right:2px;top:4px">41</div></div>
<div class="a" style="left:893px;top:759px;width:80px;height:19px;overflow:hidden"><div class="c" style="right:2px;top:4px">17/04/2015</div></div>
<div class="a" style="left:974px;top:759px;width:107px;height:19px;overflow:hidden"><div class="c" style="right:7px;top:4px">$152,239</div></div>
<div class="a" style="left:1082px;top:759px;width:74px;height:19px;overflow:hidden"><div class="c" style="right:7px;top:4px">23%</div></div>
<div class="a" style="left:1159px;top:759px;width:87px;height:19px;overflow:hidden"><div class="c" style="left:0;top:4px;">United States</div></div>
<div class="a" style="left:1249px;top:759px;width:92px;height:19px;overflow:hidden"><div class="c" style="left:0;top:4px;">Columbus</div></div>
<div class="a" style="left:26px;top:798px;width:1394px;height:1px;background:#3eaf83"></div>
<div class="a" style="left:28px;top:779px;width:47px;height:19px;overflow:hidden"><div class="c" style="left:0;top:4px;letter-spacing:-0.35px">E04545</div></div>
<div class="a" style="left:78px;top:779px;width:141px;height:19px;overflow:hidden"><div class="c" style="left:0;top:4px;">Abigail Mejia</div></div>
<div class="a" style="left:222px;top:779px;width:191px;height:19px;overflow:hidden"><div class="c" style="left:0;top:4px;">Quality Engineer</div></div>
<div class="a" style="left:416px;top:779px;width:115px;height:19px;overflow:hidden"><div class="c" style="left:0;top:4px;">Engineering</div></div>
<div class="a" style="left:534px;top:779px;width:164px;height:19px;overflow:hidden"><div class="c" style="left:0;top:4px;">Manufacturing</div></div>
<div class="a" style="left:701px;top:779px;width:67px;height:19px;overflow:hidden"><div class="c" style="left:0;top:4px;">Female</div></div>
<div class="a" style="left:771px;top:779px;width:74px;height:19px;overflow:hidden"><div class="c" style="left:0;top:4px;">Latino</div></div>
<div class="a" style="left:846px;top:779px;width:46px;height:19px;overflow:hidden"><div class="c" style="right:2px;top:4px">56</div></div>
<div class="a" style="left:893px;top:779px;width:80px;height:19px;overflow:hidden"><div class="c" style="right:2px;top:4px">05/02/2005</div></div>
<div class="a" style="left:974px;top:779px;width:107px;height:19px;overflow:hidden"><div class="c" style="right:7px;top:4px">$98,581</div></div>
<div class="a" style="left:1082px;top:779px;width:74px;height:19px;overflow:hidden"><div class="c" style="right:7px;top:4px">0%</div></div>
<div class="a" style="left:1159px;top:779px;width:87px;height:19px;overflow:hidden"><div class="c" style="left:0;top:4px;">Brazil</div></div>
<div class="a" style="left:1249px;top:779px;width:92px;height:19px;overflow:hidden"><div class="c" style="left:0;top:4px;">Rio de Janerio</div></div>
<div class="a" style="left:26px;top:818px;width:1394px;height:1px;background:#3eaf83"></div>
<div class="a" style="left:28px;top:799px;width:47px;height:19px;overflow:hidden"><div class="c" style="left:0;top:4px;letter-spacing:-0.35px">E00154</div></div>
<div class="a" style="left:78px;top:799px;width:141px;height:19px;overflow:hidden"><div class="c" style="left:0;top:4px;">Wyatt Chin</div></div>
<div class="a" style="left:222px;top:799px;width:191px;height:19px;overflow:hidden"><div class="c" style="left:0;top:4px;">Vice President</div></div>
<div class="a" style="left:416px;top:799px;width:115px;height:19px;overflow:hidden"><div class="c" style="left:0;top:4px;">Engineering</div></div>
<div class="a" style="left:534px;top:799px;width:164px;height:19px;overflow:hidden"><div class="c" style="left:0;top:4px;">Manufacturing</div></div>
<div class="a" style="left:701px;top:799px;width:67px;height:19px;overflow:hidden"><div class="c" style="left:0;top:4px;">Male</div></div>
<div class="a" style="left:771px;top:799px;width:74px;height:19px;overflow:hidden"><div class="c" style="left:0;top:4px;">Asian</div></div>
<div class="a" style="left:846px;top:799px;width:46px;height:19px;overflow:hidden"><div class="c" style="right:2px;top:4px">43</div></div>
<div class="a" style="left:893px;top:799px;width:80px;height:19px;overflow:hidden"><div class="c" style="right:2px;top:4px">07/06/2004</div></div>
<div class="a" style="left:974px;top:799px;width:107px;height:19px;overflow:hidden"><div class="c" style="right:7px;top:4px">$246,231</div></div>
<div class="a" style="left:1082px;top:799px;width:74px;height:19px;overflow:hidden"><div class="c" style="right:7px;top:4px">31%</div></div>
<div class="a" style="left:1159px;top:799px;width:87px;height:19px;overflow:hidden"><div class="c" style="left:0;top:4px;">United States</div></div>
<div class="a" style="left:1249px;top:799px;width:92px;height:19px;overflow:hidden"><div class="c" style="left:0;top:4px;">Seattle</div></div>
<div class="a" style="left:26px;top:838px;width:1394px;height:1px;background:#3eaf83"></div>
<div class="a" style="left:28px;top:819px;width:47px;height:19px;overflow:hidden"><div class="c" style="left:0;top:4px;letter-spacing:-0.35px">E03343</div></div>
<div class="a" style="left:78px;top:819px;width:141px;height:19px;overflow:hidden"><div class="c" style="left:0;top:4px;">Carson Lu</div></div>
<div class="a" style="left:222px;top:819px;width:191px;height:19px;overflow:hidden"><div class="c" style="left:0;top:4px;">Engineering Manager</div></div>
<div class="a" style="left:416px;top:819px;width:115px;height:19px;overflow:hidden"><div class="c" style="left:0;top:4px;">Engineering</div></div>
<div class="a" style="left:534px;top:819px;width:164px;height:19px;overflow:hidden"><div class="c" style="left:0;top:4px;">Corporate</div></div>
<div class="a" style="left:701px;top:819px;width:67px;height:19px;overflow:hidden"><div class="c" style="left:0;top:4px;">Male</div></div>
<div class="a" style="left:771px;top:819px;width:74px;height:19px;overflow:hidden"><div class="c" style="left:0;top:4px;">Asian</div></div>
<div class="a" style="left:846px;top:819px;width:46px;height:19px;overflow:hidden"><div class="c" style="right:2px;top:4px">64</div></div>
<div class="a" style="left:893px;top:819px;width:80px;height:19px;overflow:hidden"><div class="c" style="right:2px;top:4px">04/12/1996</div></div>
<div class="a" style="left:974px;top:819px;width:107px;height:19px;overflow:hidden"><div class="c" style="right:7px;top:4px">$99,354</div></div>
<div class="a" style="left:1082px;top:819px;width:74px;height:19px;overflow:hidden"><div class="c" style="right:7px;top:4px">12%</div></div>
<div class="a" style="left:1159px;top:819px;width:87px;height:19px;overflow:hidden"><div class="c" style="left:0;top:4px;">China</div></div>
<div class="a" style="left:1249px;top:819px;width:92px;height:19px;overflow:hidden"><div class="c" style="left:0;top:4px;">Beijing</div></div>
<div class="a" style="left:26px;top:858px;width:1394px;height:1px;background:#3eaf83"></div>
<div class="a" style="left:28px;top:839px;width:47px;height:19px;overflow:hidden"><div class="c" style="left:0;top:4px;letter-spacing:-0.35px">E00304</div></div>
<div class="a" style="left:78px;top:839px;width:141px;height:19px;overflow:hidden"><div class="c" style="left:0;top:4px;">Dylan Choi</div></div>
<div class="a" style="left:222px;top:839px;width:191px;height:19px;overflow:hidden"><div class="c" style="left:0;top:4px;">Vice President</div></div>
<div class="a" style="left:416px;top:839px;width:115px;height:19px;overflow:hidden"><div class="c" style="left:0;top:4px;">IT</div></div>
<div class="a" style="left:534px;top:839px;width:164px;height:19px;overflow:hidden"><div class="c" style="left:0;top:4px;">Manufacturing</div></div>
<div class="a" style="left:701px;top:839px;width:67px;height:19px;overflow:hidden"><div class="c" style="left:0;top:4px;">Male</div></div>
<div class="a" style="left:771px;top:839px;width:74px;height:19px;overflow:hidden"><div class="c" style="left:0;top:4px;">Asian</div></div>
<div class="a" style="left:846px;top:839px;width:46px;height:19px;overflow:hidden"><div class="c" style="right:2px;top:4px">63</div></div>
<div class="a" style="left:893px;top:839px;width:80px;height:19px;overflow:hidden"><div class="c" style="right:2px;top:4px">11/05/2012</div></div>
<div class="a" style="left:974px;top:839px;width:107px;height:19px;overflow:hidden"><div class="c" style="right:7px;top:4px">$231,141</div></div>
<div class="a" style="left:1082px;top:839px;width:74px;height:19px;overflow:hidden"><div class="c" style="right:7px;top:4px">34%</div></div>
<div class="a" style="left:1159px;top:839px;width:87px;height:19px;overflow:hidden"><div class="c" style="left:0;top:4px;">China</div></div>
<div class="a" style="left:1249px;top:839px;width:92px;height:19px;overflow:hidden"><div class="c" style="left:0;top:4px;">Beijing</div></div>
<div class="a" style="left:26px;top:878px;width:1394px;height:1px;background:#3eaf83"></div>
<div class="a" style="left:28px;top:859px;width:47px;height:19px;overflow:hidden"><div class="c" style="left:0;top:4px;letter-spacing:-0.35px">E02594</div></div>
<div class="a" style="left:78px;top:859px;width:141px;height:19px;overflow:hidden"><div class="c" style="left:0;top:4px;">Ezekiel Kumar</div></div>
<div class="a" style="left:222px;top:859px;width:191px;height:19px;overflow:hidden"><div class="c" style="left:0;top:4px;">IT Coordinator</div></div>
<div class="a" style="left:416px;top:859px;width:115px;height:19px;overflow:hidden"><div class="c" style="left:0;top:4px;">IT</div></div>
<div class="a" style="left:534px;top:859px;width:164px;height:19px;overflow:hidden"><div class="c" style="left:0;top:4px;">Manufacturing</div></div>
<div class="a" style="left:701px;top:859px;width:67px;height:19px;overflow:hidden"><div class="c" style="left:0;top:4px;">Male</div></div>
<div class="a" style="left:771px;top:859px;width:74px;height:19px;overflow:hidden"><div class="c" style="left:0;top:4px;">Asian</div></div>
<div class="a" style="left:846px;top:859px;width:46px;height:19px;overflow:hidden"><div class="c" style="right:2px;top:4px">28</div></div>
<div class="a" style="left:893px;top:859px;width:80px;height:19px;overflow:hidden"><div class="c" style="right:2px;top:4px">25/06/2017</div></div>
<div class="a" style="left:974px;top:859px;width:107px;height:19px;overflow:hidden"><div class="c" style="right:7px;top:4px">$54,775</div></div>
<div class="a" style="left:1082px;top:859px;width:74px;height:19px;overflow:hidden"><div class="c" style="right:7px;top:4px">0%</div></div>
<div class="a" style="left:1159px;top:859px;width:87px;height:19px;overflow:hidden"><div class="c" style="left:0;top:4px;">United States</div></div>
<div class="a" style="left:1249px;top:859px;width:92px;height:19px;overflow:hidden"><div class="c" style="left:0;top:4px;">Columbus</div></div>
<div class="a" style="left:26px;top:898px;width:1394px;height:1px;background:#3eaf83"></div>
<div class="a" style="left:28px;top:879px;width:47px;height:19px;overflow:hidden"><div class="c" style="left:0;top:4px;letter-spacing:-0.35px">E00402</div></div>
<div class="a" style="left:78px;top:879px;width:141px;height:19px;overflow:hidden"><div class="c" style="left:0;top:4px;">Dominic Guzman</div></div>
<div class="a" style="left:222px;top:879px;width:191px;height:19px;overflow:hidden"><div class="c" style="left:0;top:4px;">Analyst</div></div>
<div class="a" style="left:416px;top:879px;width:115px;height:19px;overflow:hidden"><div class="c" style="left:0;top:4px;">Finance</div></div>
<div class="a" style="left:534px;top:879px;width:164px;height:19px;overflow:hidden"><div class="c" style="left:0;top:4px;">Corporate</div></div>
<div class="a" style="left:701px;top:879px;width:67px;height:19px;overflow:hidden"><div class="c" style="left:0;top:4px;">Male</div></div>
<div class="a" style="left:771px;top:879px;width:74px;height:19px;overflow:hidden"><div class="c" style="left:0;top:4px;">Latino</div></div>
<div class="a" style="left:846px;top:879px;width:46px;height:19px;overflow:hidden"><div class="c" style="right:2px;top:4px">65</div></div>
<div class="a" style="left:893px;top:879px;width:80px;height:19px;overflow:hidden"><div class="c" style="right:2px;top:4px">11/05/2014</div></div>
<div class="a" style="left:974px;top:879px;width:107px;height:19px;overflow:hidden"><div class="c" style="right:7px;top:4px">$55,499</div></div>
<div class="a" style="left:1082px;top:879px;width:74px;height:19px;overflow:hidden"><div class="c" style="right:7px;top:4px">0%</div></div>
<div class="a" style="left:1159px;top:879px;width:87px;height:19px;overflow:hidden"><div class="c" style="left:0;top:4px;">Brazil</div></div>
<div class="a" style="left:1249px;top:879px;width:92px;height:19px;overflow:hidden"><div class="c" style="left:0;top:4px;">Manaus</div></div>
<div class="a" style="left:26px;top:918px;width:1394px;height:1px;background:#3eaf83"></div>
<div class="a" style="left:28px;top:899px;width:47px;height:19px;overflow:hidden"><div class="c" style="left:0;top:4px;letter-spacing:-0.35px">E01994</div></div>
<div class="a" style="left:78px;top:899px;width:141px;height:19px;overflow:hidden"><div class="c" style="left:0;top:4px;">Angel Powell</div></div>
<div class="a" style="left:222px;top:899px;width:191px;height:19px;overflow:hidden"><div class="c" style="left:0;top:4px;">Analyst II</div></div>
<div class="a" style="left:416px;top:899px;width:115px;height:19px;overflow:hidden"><div class="c" style="left:0;top:4px;">Sales</div></div>
<div class="a" style="left:534px;top:899px;width:164px;height:19px;overflow:hidden"><div class="c" style="left:0;top:4px;">Corporate</div></div>
<div class="a" style="left:701px;top:899px;width:67px;height:19px;overflow:hidden"><div class="c" style="left:0;top:4px;">Male</div></div>
<div class="a" style="left:771px;top:899px;width:74px;height:19px;overflow:hidden"><div class="c" style="left:0;top:4px;">Caucasian</div></div>
<div class="a" style="left:846px;top:899px;width:46px;height:19px;overflow:hidden"><div class="c" style="right:2px;top:4px">61</div></div>
<div class="a" style="left:893px;top:899px;width:80px;height:19px;overflow:hidden"><div class="c" style="right:2px;top:4px">11/07/2003</div></div>
<div class="a" style="left:974px;top:899px;width:107px;height:19px;overflow:hidden"><div class="c" style="right:7px;top:4px">$59,521</div></div>
<div class="a" style="left:1082px;top:899px;width:74px;height:19px;overflow:hidden"><div class="c" style="right:7px;top:4px">0%</div></div>
<div class="a" style="left:1159px;top:899px;width:87px;height:19px;overflow:hidden"><div class="c" style="left:0;top:4px;">United States</div></div>
<div class="a" style="left:1249px;top:899px;width:92px;height:19px;overflow:hidden"><div class="c" style="left:0;top:4px;">Seattle</div></div>
<div class="a" style="left:26px;top:938px;width:1394px;height:1px;background:#3eaf83"></div>
<div class="a" style="left:28px;top:919px;width:47px;height:19px;overflow:hidden"><div class="c" style="left:0;top:4px;letter-spacing:-0.35px">E03549</div></div>
<div class="a" style="left:78px;top:919px;width:141px;height:19px;overflow:hidden"><div class="c" style="left:0;top:4px;">Mateo Vu</div></div>
<div class="a" style="left:222px;top:919px;width:191px;height:19px;overflow:hidden"><div class="c" style="left:0;top:4px;">Account Representative</div></div>
<div class="a" style="left:416px;top:919px;width:115px;height:19px;overflow:hidden"><div class="c" style="left:0;top:4px;">Sales</div></div>
<div class="a" style="left:534px;top:919px;width:164px;height:19px;overflow:hidden"><div class="c" style="left:0;top:4px;">Speciality Products</div></div>
<div class="a" style="left:701px;top:919px;width:67px;height:19px;overflow:hidden"><div class="c" style="left:0;top:4px;">Male</div></div>
<div class="a" style="left:771px;top:919px;width:74px;height:19px;overflow:hidden"><div class="c" style="left:0;top:4px;">Asian</div></div>
<div class="a" style="left:846px;top:919px;width:46px;height:19px;overflow:hidden"><div class="c" style="right:2px;top:4px">30</div></div>
<div class="a" style="left:893px;top:919px;width:80px;height:19px;overflow:hidden"><div class="c" style="right:2px;top:4px">29/09/2016</div></div>
<div class="a" style="left:974px;top:919px;width:107px;height:19px;overflow:hidden"><div class="c" style="right:7px;top:4px">$59,100</div></div>
<div class="a" style="left:1082px;top:919px;width:74px;height:19px;overflow:hidden"><div class="c" style="right:7px;top:4px">0%</div></div>
<div class="a" style="left:1159px;top:919px;width:87px;height:19px;overflow:hidden"><div class="c" style="left:0;top:4px;">China</div></div>
<div class="a" style="left:1249px;top:919px;width:92px;height:19px;overflow:hidden"><div class="c" style="left:0;top:4px;">Chongqing</div></div>
<div class="a" style="left:26px;top:958px;width:1394px;height:1px;background:#3eaf83"></div>
<div class="a" style="left:28px;top:939px;width:47px;height:19px;overflow:hidden"><div class="c" style="left:0;top:4px;letter-spacing:-0.35px">E03247</div></div>
<div class="a" style="left:78px;top:939px;width:141px;height:19px;overflow:hidden"><div class="c" style="left:0;top:4px;">Caroline Jenkins</div></div>
<div class="a" style="left:222px;top:939px;width:191px;height:19px;overflow:hidden"><div class="c" style="left:0;top:4px;">Analyst</div></div>
<div class="a" style="left:416px;top:939px;width:115px;height:19px;overflow:hidden"><div class="c" style="left:0;top:4px;">Finance</div></div>
<div class="a" style="left:534px;top:939px;width:164px;height:19px;overflow:hidden"><div class="c" style="left:0;top:4px;">Corporate</div></div>
<div class="a" style="left:701px;top:939px;width:67px;height:19px;overflow:hidden"><div class="c" style="left:0;top:4px;">Female</div></div>
<div class="a" style="left:771px;top:939px;width:74px;height:19px;overflow:hidden"><div class="c" style="left:0;top:4px;">Caucasian</div></div>
<div class="a" style="left:846px;top:939px;width:46px;height:19px;overflow:hidden"><div class="c" style="right:2px;top:4px">27</div></div>
<div class="a" style="left:893px;top:939px;width:80px;height:19px;overflow:hidden"><div class="c" style="right:2px;top:4px">06/05/2018</div></div>
<div class="a" style="left:974px;top:939px;width:107px;height:19px;overflow:hidden"><div class="c" style="right:7px;top:4px">$49,011</div></div>
<div class="a" style="left:1082px;top:939px;width:74px;height:19px;overflow:hidden"><div class="c" style="right:7px;top:4px">0%</div></div>
<div class="a" style="left:1159px;top:939px;width:87px;height:19px;overflow:hidden"><div class="c" style="left:0;top:4px;">United States</div></div>
<div class="a" style="left:1249px;top:939px;width:92px;height:19px;overflow:hidden"><div class="c" style="left:0;top:4px;">Chicago</div></div>
<div class="a" style="left:26px;top:978px;width:1394px;height:1px;background:#3eaf83"></div>
<div class="a" style="left:28px;top:959px;width:47px;height:19px;overflow:hidden"><div class="c" style="left:0;top:4px;letter-spacing:-0.35px">E02074</div></div>
<div class="a" style="left:78px;top:959px;width:141px;height:19px;overflow:hidden"><div class="c" style="left:0;top:4px;">Nora Brown</div></div>
<div class="a" style="left:222px;top:959px;width:191px;height:19px;overflow:hidden"><div class="c" style="left:0;top:4px;">Enterprise Architect</div></div>
<div class="a" style="left:416px;top:959px;width:115px;height:19px;overflow:hidden"><div class="c" style="left:0;top:4px;">IT</div></div>
<div class="a" style="left:534px;top:959px;width:164px;height:19px;overflow:hidden"><div class="c" style="left:0;top:4px;">Manufacturing</div></div>
<div class="a" style="left:701px;top:959px;width:67px;height:19px;overflow:hidden"><div class="c" style="left:0;top:4px;">Female</div></div>
<div class="a" style="left:771px;top:959px;width:74px;height:19px;overflow:hidden"><div class="c" style="left:0;top:4px;">Caucasian</div></div>
<div class="a" style="left:846px;top:959px;width:46px;height:19px;overflow:hidden"><div class="c" style="right:2px;top:4px">32</div></div>
<div class="a" style="left:893px;top:959px;width:80px;height:19px;overflow:hidden"><div class="c" style="right:2px;top:4px">11/02/2014</div></div>
<div class="a" style="left:974px;top:959px;width:107px;height:19px;overflow:hidden"><div class="c" style="right:7px;top:4px">$99,575</div></div>
<div class="a" style="left:1082px;top:959px;width:74px;height:19px;overflow:hidden"><div class="c" style="right:7px;top:4px">0%</div></div>
<div class="a" style="left:1159px;top:959px;width:87px;height:19px;overflow:hidden"><div class="c" style="left:0;top:4px;">United States</div></div>
<div class="a" style="left:1249px;top:959px;width:92px;height:19px;overflow:hidden"><div class="c" style="left:0;top:4px;">Austin</div></div>
<div class="a" style="left:28px;top:979px;width:47px;height:7px;overflow:hidden"><div class="c" style="left:0;top:4px;letter-spacing:-0.35px">E04152</div></div>
<div class="a" style="left:78px;top:979px;width:141px;height:7px;overflow:hidden"><div class="c" style="left:0;top:4px;">Adeline Huynh</div></div>
<div class="a" style="left:222px;top:979px;width:191px;height:7px;overflow:hidden"><div class="c" style="left:0;top:4px;">Controls Engineer</div></div>
<div class="a" style="left:416px;top:979px;width:115px;height:7px;overflow:hidden"><div class="c" style="left:0;top:4px;">Engineering</div></div>
<div class="a" style="left:534px;top:979px;width:164px;height:7px;overflow:hidden"><div class="c" style="left:0;top:4px;">Manufacturing</div></div>
<div class="a" style="left:701px;top:979px;width:67px;height:7px;overflow:hidden"><div class="c" style="left:0;top:4px;">Female</div></div>
<div class="a" style="left:771px;top:979px;width:74px;height:7px;overflow:hidden"><div class="c" style="left:0;top:4px;">Asian</div></div>
<div class="a" style="left:846px;top:979px;width:46px;height:7px;overflow:hidden"><div class="c" style="right:2px;top:4px">51</div></div>
<div class="a" style="left:893px;top:979px;width:80px;height:7px;overflow:hidden"><div class="c" style="right:2px;top:4px">10/10/2015</div></div>
<div class="a" style="left:974px;top:979px;width:107px;height:7px;overflow:hidden"><div class="c" style="right:7px;top:4px">$98,388</div></div>
<div class="a" style="left:1082px;top:979px;width:74px;height:7px;overflow:hidden"><div class="c" style="right:7px;top:4px">0%</div></div>
<div class="a" style="left:1159px;top:979px;width:87px;height:7px;overflow:hidden"><div class="c" style="left:0;top:4px;">China</div></div>
<div class="a" style="left:1249px;top:979px;width:92px;height:7px;overflow:hidden"><div class="c" style="left:0;top:4px;">Shanghai</div></div>
<div class="a" style="left:415px;top:600px;width:117px;height:19px;border:1px solid #1f6b41"></div>
<div class="a" style="left:1611px;top:678px;width:65px;height:21px;border:1px solid #a8a8a8;background:#fff"></div>
<div class="a" style="left:1613px;top:680px;width:61px;height:17px;background:#c6c6c6"></div>
<div class="a" style="left:1419px;top:239px;width:1px;height:747px;background:#3eaf83"></div>
<div class="a" style="left:25px;top:239px;width:1px;height:747px;background:#3eaf83"></div>
<div class="a" style="left:1898px;top:214px;width:22px;height:772px;background:#f3f3f3"></div>
<svg style="left:1904px;top:223px" width="11" height="7"><path d="M5.5 0 L11 7 L0 7 Z" fill="#6e6e6e"/></svg>
<div class="a" style="left:1905px;top:236px;width:9px;height:27px;background:#717171;border-radius:5px"></div>
<svg style="left:1904px;top:977px" width="11" height="7"><path d="M0 0 L11 0 L5.5 7 Z" fill="#6e6e6e"/></svg>
<svg style="left:16px;top:16px;" width="17" height="16" viewBox="0 0 17 16"><rect x="5" y="0" width="12" height="16" rx="1.2" fill="#21a366"/><rect x="5" y="0" width="12" height="5.3" fill="#33c481"/><rect x="5" y="10.7" width="12" height="5.3" fill="#185c37"/><rect x="11" y="5.3" width="6" height="5.4" fill="#107c41"/><rect x="0" y="3" width="10" height="10" rx="1" fill="#107c41"/><path d="M2.6 5 L4.2 5 L5 6.7 L5.8 5 L7.4 5 L5.9 8 L7.5 11 L5.9 11 L5 9.3 L4.1 11 L2.5 11 L4.1 8 Z" fill="#fff"/></svg>
<svg style="left:48px;top:16px;" width="16" height="16" viewBox="0 0 16 16"><path d="M0.8 0.8 H15.2 V15.2 H3 L0.8 13 Z" fill="#dca4e8" stroke="#9c2fb4" stroke-width="1.1"/><rect x="4" y="1.3" width="8" height="4.7" fill="#f7f7f7" stroke="#9c2fb4" stroke-width="0.8"/><rect x="4" y="10" width="8" height="5" fill="#f7f7f7" stroke="#9c2fb4" stroke-width="0.8"/></svg>
<svg style="left:77px;top:15px;" width="15" height="17" viewBox="0 0 15 17"><path d="M1.5 1 V7 H7.5" fill="none" stroke="#333" stroke-width="1.1"/><path d="M2 6.5 C4.5 2.5 13.5 2 13.5 8.5 C13.5 10.5 12 12.5 6 16" fill="none" stroke="#333" stroke-width="1.1"/></svg>
<svg style="left:98px;top:22px;" width="7" height="4.5" viewBox="0 0 7 4.5"><path d="M0.5 0.5 L3.5 4.0 L6.5 0.5" fill="none" stroke="#444" stroke-width="1.1"/></svg>
<svg style="left:116px;top:15px;" width="15" height="17" viewBox="0 0 15 17"><path d="M13.5 1 V7 H7.5" fill="none" stroke="#999" stroke-width="1.1"/><path d="M13 6.5 C10.5 2.5 1.5 2 1.5 8.5 C1.5 10.5 3 12.5 9 16" fill="none" stroke="#999" stroke-width="1.1"/></svg>
<svg style="left:138px;top:22px;" width="7" height="4.5" viewBox="0 0 7 4.5"><path d="M0.5 0.5 L3.5 4.0 L6.5 0.5" fill="none" stroke="#bbb" stroke-width="1.1"/></svg>
<svg style="left:159px;top:20px;" width="8" height="9" viewBox="0 0 8 9"><path d="M0.5 0.5 H7.5" stroke="#444" stroke-width="1"/><path d="M1 3.5 L4 6.5 L7 3.5" fill="none" stroke="#444" stroke-width="1.1"/></svg>
<div class="t" style="left:183px;top:19.14px;font-size:12px;color:#242424;white-space:pre;letter-spacing:-0.2px">Employee Sample Data  -  Excel</div>
<div class="a" style="left:840px;top:0;width:48px;height:2px;background:#1a73c7"></div>
<div class="a" style="left:888px;top:0;width:193px;height:1px;background:#e0e0e0"></div>
<div class="a" style="left:735px;top:9px;width:467px;height:31px;background:#f9f9f9;border:1px solid #dcdcdc;border-radius:5px;box-shadow:0 1px 0 #e2e2e2"></div>
<svg style="left:754px;top:16px;" width="17" height="16" viewBox="0 0 17 16"><circle cx="10.5" cy="6" r="4.6" fill="none" stroke="#555" stroke-width="1.1"/><path d="M7.2 9.3 L1.5 15" stroke="#555" stroke-width="1.2"/></svg>
<div class="t" style="left:783px;top:19.07px;font-size:12.2px;color:#5c5c5c;">Search</div>
<div class="t" style="left:1582px;top:18.84px;font-size:12px;color:#242424;">Muhammad Qasim</div>
<div class="a" style="left:1694px;top:12px;width:24px;height:24px;border-radius:50%;background:#d13438"></div>
<div class="t" style="left:1694px;top:18.26px;font-size:11.5px;color:#fff;width:24px;text-align:center;letter-spacing:-0.6px">MQ</div>
<svg style="left:1745px;top:15px;" width="18" height="18" viewBox="0 0 18 18"><path d="M2 14 L9 4 L14 9 L4 16 Z" fill="none" stroke="#444" stroke-width="1.1"/><circle cx="6" cy="13.5" r="1.5" fill="none" stroke="#444"/><path d="M13 3 L14.5 1 M15 5 L17 4 M11.5 2 L12 0.5" stroke="#1a86d8" stroke-width="1"/></svg>
<div class="a" style="left:1795px;top:23px;width:10px;height:1px;background:#333"></div>
<svg style="left:1843px;top:18px;" width="11" height="11" viewBox="0 0 11 11"><rect x="0.5" y="2.5" width="8" height="8" rx="1.5" fill="none" stroke="#333"/><path d="M2.5 0.5 H8.5 C9.6 0.5 10.5 1.4 10.5 2.5 V8.5" fill="none" stroke="#333"/></svg>
<svg style="left:1891px;top:19px;" width="11" height="11" viewBox="0 0 11 11"><path d="M0.5 0.5 L10.5 10.5 M10.5 0.5 L0.5 10.5" stroke="#333" stroke-width="1.1"/></svg>
<div class="t" style="left:22px;top:57.46px;font-size:12.8px;color:#242424;">File</div>
<div class="t" style="left:67px;top:57.46px;font-size:12.8px;color:#242424;font-weight:bold">Home</div>
<div class="t" style="left:124px;top:57.46px;font-size:12.8px;color:#242424;">Insert</div>
<div class="t" style="left:179px;top:57.46px;font-size:12.8px;color:#242424;">Page Layout</div>
<div class="t" style="left:272px;top:57.46px;font-size:12.8px;color:#242424;">Formulas</div>
<div class="t" style="left:346px;top:57.46px;font-size:12.8px;color:#242424;">Data</div>
<div class="t" style="left:394px;top:57.46px;font-size:12.8px;color:#242424;">Review</div>
<div class="t" style="left:454px;top:57.46px;font-size:12.8px;color:#242424;">View</div>
<div class="t" style="left:501px;top:57.46px;font-size:12.8px;color:#242424;">Help</div>
<div class="t" style="left:548px;top:57.46px;font-size:12.8px;color:#107c41;">Table Design</div>
<div class="a" style="left:67px;top:72px;width:38px;height:3px;background:#107c41;border-radius:1.5px"></div>
<div class="a" style="left:1829px;top:51px;width:80px;height:24px;background:#107c41;border-radius:4px"></div>
<svg style="left:1836px;top:57px;" width="14" height="13" viewBox="0 0 14 13"><path d="M1 5 V12 H11 V9" fill="none" stroke="#fff" stroke-width="1.1"/><path d="M4 9 C4 5 7 3.5 10 3.5 V1 L13.5 4.5 L10 8 V5.7 C7.5 5.7 5.5 6.5 4 9 Z" fill="none" stroke="#fff" stroke-width="1"/></svg>
<div class="t" style="left:1852px;top:58.16px;font-size:12.8px;color:#fff;">Share</div>
<svg style="left:1892px;top:61px;" width="8" height="5" viewBox="0 0 8 5"><path d="M0.5 0.5 L4 4 L7.5 0.5" fill="none" stroke="#fff" stroke-width="1.2"/></svg>
<div class="a" style="left:8px;top:78px;width:1904px;height:100px;background:#fff;border-radius:8px;box-shadow:0 0.5px 1.5px rgba(0,0,0,.25)"></div>
<div class="a" style="left:182px;top:83px;width:1px;height:89px;background:#e0e0e0"></div>
<div class="a" style="left:417px;top:83px;width:1px;height:89px;background:#e0e0e0"></div>
<div class="a" style="left:712px;top:83px;width:1px;height:89px;background:#e0e0e0"></div>
<div class="a" style="left:874px;top:83px;width:1px;height:89px;background:#e0e0e0"></div>
<div class="a" style="left:1472px;top:83px;width:1px;height:89px;background:#e0e0e0"></div>
<div class="a" style="left:1619px;top:83px;width:1px;height:89px;background:#e0e0e0"></div>
<div class="a" style="left:1827px;top:83px;width:1px;height:89px;background:#e0e0e0"></div>
<div class="t" style="left:-11px;width:200px;text-align:center;top:162.34px;font-size:12px;color:#242424;">Clipboard</div>
<svg style="left:171px;top:163px;" width="8" height="8" viewBox="0 0 8 8"><path d="M0.5 0.5 H7.5 V7.5" fill="none" stroke="#666" stroke-width="0.9"/><path d="M2 2 L6.5 6.5 M3 6.5 H6.5 V3" fill="none" stroke="#666" stroke-width="0.9"/></svg>
<div class="t" style="left:193px;width:200px;text-align:center;top:162.34px;font-size:12px;color:#242424;">Font</div>
<svg style="left:406px;top:163px;" width="8" height="8" viewBox="0 0 8 8"><path d="M0.5 0.5 H7.5 V7.5" fill="none" stroke="#666" stroke-width="0.9"/><path d="M2 2 L6.5 6.5 M3 6.5 H6.5 V3" fill="none" stroke="#666" stroke-width="0.9"/></svg>
<div class="t" style="left:457px;width:200px;text-align:center;top:162.34px;font-size:12px;color:#242424;">Alignment</div>
<svg style="left:701px;top:163px;" width="8" height="8" viewBox="0 0 8 8"><path d="M0.5 0.5 H7.5 V7.5" fill="none" stroke="#666" stroke-width="0.9"/><path d="M2 2 L6.5 6.5 M3 6.5 H6.5 V3" fill="none" stroke="#666" stroke-width="0.9"/></svg>
<div class="t" style="left:686px;width:200px;text-align:center;top:162.34px;font-size:12px;color:#242424;">Number</div>
<svg style="left:864px;top:163px;" width="8" height="8" viewBox="0 0 8 8"><path d="M0.5 0.5 H7.5 V7.5" fill="none" stroke="#666" stroke-width="0.9"/><path d="M2 2 L6.5 6.5 M3 6.5 H6.5 V3" fill="none" stroke="#666" stroke-width="0.9"/></svg>
<div class="t" style="left:1073px;width:200px;text-align:center;top:162.34px;font-size:12px;color:#242424;">Styles</div>
<div class="t" style="left:1446px;width:200px;text-align:center;top:162.34px;font-size:12px;color:#242424;">Cells</div>
<div class="t" style="left:1623px;width:200px;text-align:center;top:162.34px;font-size:12px;color:#242424;">Editing</div>
<svg style="left:29px;top:86px;" width="30" height="31" viewBox="0 0 30 31"><path d="M1.6 5.6 H21.4 V28.4 H1.6 Z" fill="#fdf2c8" stroke="#e07a10" stroke-width="1.3"/><rect x="3.5" y="7" width="16" height="20" fill="#f7f7f7"/><path d="M5.5 3.5 H9 C9 1.5 10.3 0.7 11.5 0.7 C12.7 0.7 14 1.5 14 3.5 H17.5 V7.5 H5.5 Z" fill="#fff" stroke="#666" stroke-width="1"/><rect x="14.5" y="13.5" width="13.5" height="17" fill="#f7f7f7" stroke="#444" stroke-width="1.1"/></svg>
<div class="t" style="left:28px;top:122.64px;font-size:12px;color:#242424;">Paste</div>
<svg style="left:37px;top:143px;" width="7" height="4.5" viewBox="0 0 7 4.5"><path d="M0.5 0.5 L3.5 4.0 L6.5 0.5" fill="none" stroke="#444" stroke-width="1.1"/></svg>
<svg style="left:70px;top:86px;" width="12" height="17" viewBox="0 0 12 17"><path d="M2.5 0.5 L8.5 11.5 M9.5 0.5 L3.5 11.5" stroke="#555" stroke-width="1"/><circle cx="3" cy="14" r="1.9" fill="none" stroke="#1a86d8" stroke-width="1.2"/><circle cx="9" cy="14" r="1.9" fill="none" stroke="#1a86d8" stroke-width="1.2"/></svg>
<div class="t" style="left:88.5px;top:88.54px;font-size:12px;color:#242424;">Cut</div>
<svg style="left:68px;top:112px;" width="17" height="17" viewBox="0 0 17 17"><path d="M5.5 0.5 H0.5 V13.5 H4.5" fill="none" stroke="#444"/><path d="M6.5 3.5 H11.5 L15.5 7.5 V16.5 H6.5 Z" fill="none" stroke="#444"/><path d="M11.5 3.5 V7.5 H15.5" fill="none" stroke="#444" stroke-width="0.8"/><path d="M8.5 11 H13.5 M8.5 13.5 H13.5" stroke="#444" stroke-width="0.9"/></svg>
<div class="t" style="left:88.5px;top:114.34px;font-size:12px;color:#242424;">Copy</div>
<svg style="left:128.5px;top:119.5px;" width="7" height="4.5" viewBox="0 0 7 4.5"><path d="M0.5 0.5 L3.5 4.0 L6.5 0.5" fill="none" stroke="#444" stroke-width="1.1"/></svg>
<svg style="left:68px;top:137px;" width="17" height="17" viewBox="0 0 17 17"><path d="M10.5 5 L15.5 0.8 L16.2 1.5 L12 6.5 Z" fill="none" stroke="#444" stroke-width="0.9"/><path d="M8.5 5.5 L11.5 8.5 L10 10 L7 7 Z" fill="none" stroke="#444" stroke-width="0.9"/><path d="M7 7 L10 10 L6.5 15.5 L0.8 9.5 Z" fill="#fbd38b" stroke="#e07a10" stroke-width="1.1"/></svg>
<div class="t" style="left:88.5px;top:140.64px;font-size:12px;color:#242424;">Format Painter</div>
<div class="a" style="left:191px;top:90px;width:123px;height:24px;border:1px solid #8a8a8a;border-radius:4px;background:#fff"></div>
<div class="t" style="left:194.5px;top:95.97px;font-size:12.2px;color:#242424;">Calibri</div>
<svg style="left:304px;top:100.5px;" width="6" height="4" viewBox="0 0 6 4"><path d="M0.5 0.5 L3.0 3.5 L5.5 0.5" fill="none" stroke="#333" stroke-width="1.1"/></svg>
<div class="a" style="left:316px;top:90px;width:43px;height:24px;border:1px solid #8a8a8a;border-radius:4px;background:#fff"></div>
<div class="t" style="left:319.5px;top:95.97px;font-size:12.2px;color:#242424;">11</div>
<svg style="left:349px;top:100.5px;" width="6" height="4" viewBox="0 0 6 4"><path d="M0.5 0.5 L3.0 3.5 L5.5 0.5" fill="none" stroke="#333" stroke-width="1.1"/></svg>
<div class="t" style="left:365.5px;top:92.81px;font-size:17px;color:#333;">A</div>
<svg style="left:378px;top:94px;" width="4" height="4" viewBox="0 0 4 4"><path d="M0.5 3.5 L2 1 L3.5 3.5" fill="none" stroke="#1a86d8" stroke-width="1"/></svg>
<div class="t" style="left:393px;top:95.77px;font-size:13.5px;color:#333;">A</div>
<svg style="left:402.5px;top:94px;" width="4" height="4" viewBox="0 0 4 4"><path d="M0.5 0.5 L2 3 L3.5 0.5" fill="none" stroke="#1a86d8" stroke-width="1"/></svg>
<div class="t" style="left:199px;top:126.72px;font-size:12.5px;color:#333;font-weight:bold">B</div>
<div class="t" style="left:225px;top:125.22px;font-size:14.5px;color:#333;font-style:italic;font-family:'Liberation Serif',serif">I</div>
<div class="t" style="left:249.5px;top:126.72px;font-size:12.5px;color:#333;">U</div>
<div class="a" style="left:250px;top:139px;width:8px;height:1px;background:#333"></div>
<svg style="left:270.5px;top:133px;" width="7" height="4.5" viewBox="0 0 7 4.5"><path d="M0.5 0.5 L3.5 4.0 L6.5 0.5" fill="none" stroke="#444" stroke-width="1.1"/></svg>
<div class="a" style="left:284px;top:122px;width:1px;height:24px;background:#d0d0d0"></div>
<svg style="left:290px;top:125px;" width="17" height="17" viewBox="0 0 17 17"><path d="M1 1.5 H16 M1 15 H16 M1.5 1 V15 M15.5 1 V15 M8.5 1 V15 M1 8 H16" stroke="#444" stroke-dasharray="1 1" stroke-width="1"/><path d="M1 16.5 H16" stroke="#111" stroke-width="1.2"/></svg>
<svg style="left:314px;top:133px;" width="7" height="4.5" viewBox="0 0 7 4.5"><path d="M0.5 0.5 L3.5 4.0 L6.5 0.5" fill="none" stroke="#444" stroke-width="1.1"/></svg>
<div class="a" style="left:328px;top:122px;width:1px;height:24px;background:#d0d0d0"></div>
<svg style="left:335px;top:124px;" width="17" height="19" viewBox="0 0 17 19"><path d="M4.8 6 L9.5 3.5 L12.5 9.5 L7.5 12.8 L2.5 8 Z" fill="none" stroke="#333" stroke-width="1"/><path d="M5 5.5 V2.2 C5 0.6 7.5 0.6 7.5 2.2 V7.2" fill="none" stroke="#333" stroke-width="1"/><path d="M12.5 4.2 C14 4.8 14.3 7.5 13.3 9.2" fill="none" stroke="#1a6fc4" stroke-width="1.6"/><rect x="0" y="14" width="16" height="4" fill="#ffff00"/></svg>
<svg style="left:357.5px;top:133px;" width="7" height="4.5" viewBox="0 0 7 4.5"><path d="M0.5 0.5 L3.5 4.0 L6.5 0.5" fill="none" stroke="#444" stroke-width="1.1"/></svg>
<div class="t" style="left:378.5px;top:125.77px;font-size:13.5px;color:#333;">A</div>
<div class="a" style="left:376px;top:138px;width:16px;height:4px;background:#ff0000"></div>
<svg style="left:399px;top:133px;" width="7" height="4.5" viewBox="0 0 7 4.5"><path d="M0.5 0.5 L3.5 4.0 L6.5 0.5" fill="none" stroke="#444" stroke-width="1.1"/></svg>
<div class="a" style="left:432px;top:94px;width:14px;height:1px;background:#444"></div>
<div class="a" style="left:434px;top:98px;width:10px;height:1px;background:#444"></div>
<div class="a" style="left:432px;top:102px;width:14px;height:1px;background:#444"></div>
<div class="a" style="left:458px;top:97px;width:14px;height:1px;background:#444"></div>
<div class="a" style="left:460px;top:101px;width:10px;height:1px;background:#444"></div>
<div class="a" style="left:458px;top:105px;width:14px;height:1px;background:#444"></div>
<div class="a" style="left:479px;top:90px;width:24px;height:24px;border:1px solid #6e6e6e;border-radius:4px;background:#ebebeb"></div>
<div class="a" style="left:484px;top:101px;width:14px;height:1px;background:#444"></div>
<div class="a" style="left:486px;top:105px;width:10px;height:1px;background:#444"></div>
<div class="a" style="left:484px;top:109px;width:14px;height:1px;background:#444"></div>
<div class="a" style="left:505px;top:90px;width:1px;height:24px;background:#d0d0d0"></div>
<svg style="left:511px;top:92px;" width="20" height="19" viewBox="0 0 20 19"><g transform="rotate(-45 6 9)"><text x="-1" y="13" font-size="10" fill="#444" font-family="Liberation Sans">ab</text></g><path d="M6 17.5 L17.5 6 M12.5 5.3 H18.2 V11" fill="none" stroke="#1a86d8" stroke-width="1.2"/></svg>
<svg style="left:533px;top:101px;" width="7" height="4.5" viewBox="0 0 7 4.5"><path d="M0.5 0.5 L3.5 4.0 L6.5 0.5" fill="none" stroke="#444" stroke-width="1.1"/></svg>
<div class="a" style="left:432px;top:127px;width:14px;height:1px;background:#444"></div>
<div class="a" style="left:432px;top:131px;width:10px;height:1px;background:#444"></div>
<div class="a" style="left:432px;top:135px;width:14px;height:1px;background:#444"></div>
<div class="a" style="left:432px;top:139px;width:10px;height:1px;background:#444"></div>
<div class="a" style="left:458px;top:127px;width:14px;height:1px;background:#444"></div>
<div class="a" style="left:460px;top:131px;width:10px;height:1px;background:#444"></div>
<div class="a" style="left:458px;top:135px;width:14px;height:1px;background:#444"></div>
<div class="a" style="left:460px;top:139px;width:10px;height:1px;background:#444"></div>
<div class="a" style="left:484px;top:127px;width:14px;height:1px;background:#444"></div>
<div class="a" style="left:488px;top:131px;width:10px;height:1px;background:#444"></div>
<div class="a" style="left:484px;top:135px;width:14px;height:1px;background:#444"></div>
<div class="a" style="left:488px;top:139px;width:10px;height:1px;background:#444"></div>
<div class="a" style="left:505px;top:122px;width:1px;height:24px;background:#d0d0d0"></div>
<div class="a" style="left:513px;top:127px;width:14px;height:1px;background:#444"></div>
<div class="a" style="left:521px;top:131px;width:6px;height:1px;background:#444"></div>
<div class="a" style="left:521px;top:135px;width:6px;height:1px;background:#444"></div>
<div class="a" style="left:513px;top:139px;width:14px;height:1px;background:#444"></div>
<svg style="left:513px;top:129px;" width="8" height="8" viewBox="0 0 8 8"><path d="M7.5 4 H1 M3.8 1 L0.8 4 L3.8 7" fill="none" stroke="#1a86d8" stroke-width="1.3"/></svg>
<div class="a" style="left:539px;top:127px;width:14px;height:1px;background:#444"></div>
<div class="a" style="left:547px;top:131px;width:6px;height:1px;background:#444"></div>
<div class="a" style="left:547px;top:135px;width:6px;height:1px;background:#444"></div>
<div class="a" style="left:539px;top:139px;width:14px;height:1px;background:#444"></div>
<svg style="left:539px;top:129px;" width="8" height="8" viewBox="0 0 8 8"><path d="M0.5 4 H7 M4.2 1 L7.2 4 L4.2 7" fill="none" stroke="#1a86d8" stroke-width="1.3"/></svg>
<div class="a" style="left:564px;top:89px;width:1px;height:61px;background:#e0e0e0"></div>
<svg style="left:576px;top:94px;" width="17" height="17" viewBox="0 0 17 17"><text x="0" y="8" font-size="9.5" fill="#444" font-family="Liberation Sans">ab</text><text x="0" y="16" font-size="9.5" fill="#444" font-family="Liberation Sans">c</text><path d="M14.5 7.5 V10.5 C14.5 12.8 12.5 13.3 8.5 13.3 M10.8 10.8 L8.3 13.3 L10.8 15.8" fill="none" stroke="#1a86d8" stroke-width="1.2"/></svg>
<div class="t" style="left:595.3px;top:96.94px;font-size:12px;color:#242424;">Wrap Text</div>
<svg style="left:575px;top:126px;" width="16" height="16" viewBox="0 0 16 16"><rect x="0.5" y="0.5" width="14.5" height="14.5" fill="none" stroke="#b0b0b0"/><path d="M0.5 3.5 H15 M0.5 12 H15 M7.75 0.5 V3.5 M7.75 12 V15" stroke="#b0b0b0"/><path d="M3 7.75 H12.5 M5 5.8 L3 7.75 L5 9.7 M10.5 5.8 L12.5 7.75 L10.5 9.7" fill="none" stroke="#b0b0b0"/></svg>
<div class="t" style="left:595.5px;top:128.84px;font-size:12px;color:#a6a6a6;">Merge &amp; Center</div>
<svg style="left:692.5px;top:133px;" width="7" height="4.5" viewBox="0 0 7 4.5"><path d="M0.5 0.5 L3.5 4.0 L6.5 0.5" fill="none" stroke="#b0b0b0" stroke-width="1.1"/></svg>
<div class="a" style="left:721px;top:90px;width:146px;height:24px;border:1px solid #8a8a8a;border-radius:4px;background:#fff"></div>
<div class="t" style="left:724.5px;top:95.97px;font-size:12.2px;color:#242424;">General</div>
<svg style="left:857px;top:100.5px;" width="6" height="4" viewBox="0 0 6 4"><path d="M0.5 0.5 L3.0 3.5 L5.5 0.5" fill="none" stroke="#333" stroke-width="1.1"/></svg>
<svg style="left:725px;top:128px;" width="17" height="15" viewBox="0 0 17 15"><rect x="0.5" y="0.5" width="15" height="10" fill="none" stroke="#333"/><text x="1.5" y="8.3" font-size="7.5" fill="#333" font-family="Liberation Sans" font-weight="bold">CC</text><path d="M8.5 8.5 V13 C8.5 14.6 15.5 14.6 15.5 13 V8.5" fill="#fff" stroke="#e07a10" stroke-width="1"/><ellipse cx="12" cy="8.5" rx="3.5" ry="1.4" fill="#fff" stroke="#e07a10" stroke-width="1"/><path d="M8.5 10.8 C8.5 12.4 15.5 12.4 15.5 10.8" fill="none" stroke="#e07a10" stroke-width="0.9"/></svg>
<svg style="left:748.5px;top:133px;" width="7" height="4.5" viewBox="0 0 7 4.5"><path d="M0.5 0.5 L3.5 4.0 L6.5 0.5" fill="none" stroke="#444" stroke-width="1.1"/></svg>
<div class="t" style="left:765px;top:126.53px;font-size:16.5px;color:#333;">%</div>
<svg style="left:796px;top:128px;" width="8" height="13" viewBox="0 0 8 13"><circle cx="3.6" cy="3.6" r="3" fill="#333"/><path d="M6.2 4 C6.4 8.5 4.5 10.5 1.2 12" fill="none" stroke="#333" stroke-width="1.8"/></svg>
<div class="a" style="left:814px;top:122px;width:1px;height:24px;background:#d0d0d0"></div>
<svg style="left:820px;top:126px;" width="17" height="17" viewBox="0 0 17 17"><text x="10" y="7.5" font-size="9" fill="#333" font-family="Liberation Sans">0</text><text x="1.5" y="16" font-size="9" fill="#333" font-family="Liberation Sans">.00</text><path d="M9.5 5 H1 M3.8 2 L0.8 5 L3.8 8" fill="none" stroke="#1a86d8" stroke-width="1.2"/></svg>
<svg style="left:845px;top:126px;" width="18" height="17" viewBox="0 0 18 17"><text x="2.5" y="7.5" font-size="9" fill="#333" font-family="Liberation Sans">.00</text><text x="9" y="16" font-size="9" fill="#333" font-family="Liberation Sans">.0</text><path d="M1 12.5 H10 M7.2 9.5 L10.2 12.5 L7.2 15.5" fill="none" stroke="#1a86d8" stroke-width="1.2"/></svg>
<svg style="left:906px;top:90px;" width="28" height="22" viewBox="0 0 28 22"><rect x="0.5" y="0.5" width="27" height="21" fill="#fff" stroke="#333"/><rect x="5.5" y="0.5" width="12" height="7" fill="#f27b8b" stroke="#d12030" stroke-width="0.9"/><rect x="5.5" y="14.5" width="12" height="7" fill="#f27b8b" stroke="#d12030" stroke-width="0.9"/><rect x="5.5" y="7.5" width="7" height="7" fill="#62a9e6"/><path d="M5.5 0.5 V21.5 M17.5 0.5 V21.5 M22.5 0.5 V21.5 M0.5 7.5 H27.5 M0.5 14.5 H27.5" stroke="#333" stroke-width="0.9"/></svg>
<div class="t" style="left:820px;width:200px;text-align:center;top:122.04px;font-size:12px;color:#242424;">Conditional</div>
<div class="t" style="left:815px;width:200px;text-align:center;top:137.64px;font-size:12px;color:#242424;">Formatting</div>
<svg style="left:949.5px;top:142px;" width="5" height="3.5" viewBox="0 0 5 3.5"><path d="M0.5 0.5 L2.5 3.0 L4.5 0.5" fill="none" stroke="#444" stroke-width="1.1"/></svg>
<svg style="left:974px;top:90px;" width="31" height="26" viewBox="0 0 31 26"><rect x="0.5" y="0.5" width="27" height="21" fill="#fff" stroke="#333"/><rect x="9.5" y="7.5" width="18" height="14" fill="#7bb6ea"/><path d="M0.5 7.5 H27.5 M0.5 14.5 H27.5 M9.5 0.5 V21.5 M18.5 0.5 V21.5" stroke="#333" stroke-width="0.9"/><path d="M29.5 6 L19 17.5" stroke="#2b79c2" stroke-width="3"/><path d="M29.5 6 L19 17.5" stroke="#fff" stroke-width="1.2"/><path d="M18.5 17 C14 18 15 23 12 25 C17 25.5 21 23 20.5 19 Z" fill="#2b79c2"/></svg>
<div class="t" style="left:888px;width:200px;text-align:center;top:122.04px;font-size:12px;color:#242424;">Format as</div>
<div class="t" style="left:884px;width:200px;text-align:center;top:137.64px;font-size:12px;color:#242424;">Table</div>
<svg style="left:1001.5px;top:142px;" width="5" height="3.5" viewBox="0 0 5 3.5"><path d="M0.5 0.5 L2.5 3.0 L4.5 0.5" fill="none" stroke="#444" stroke-width="1.1"/></svg>
<div class="a" style="left:1021px;top:90px;width:441px;height:62px;border:1px solid #d6d6d6;border-radius:5px"></div>
<div class="a" style="left:1023px;top:93px;width:105px;height:27px;background:#fff;border:1px solid #555;box-shadow:inset 0 0 0 1px #e8e8e8"></div>
<div class="t" style="left:1029.5px;top:99.77px;font-size:13.5px;color:#000;">Normal</div>
<div class="a" style="left:1131px;top:96px;width:100px;height:22px;background:#ffc7ce;"></div>
<div class="t" style="left:1135.5px;top:99.77px;font-size:13.5px;color:#9c0006;">Bad</div>
<div class="a" style="left:1237px;top:96px;width:100px;height:22px;background:#c6efce;"></div>
<div class="t" style="left:1241.5px;top:99.77px;font-size:13.5px;color:#006100;">Good</div>
<div class="a" style="left:1343px;top:96px;width:100px;height:22px;background:#ffeb9c;"></div>
<div class="t" style="left:1347.5px;top:99.77px;font-size:13.5px;color:#9c5700;">Neutral</div>
<div class="a" style="left:1025px;top:124px;width:100px;height:21px;background:#f2f2f2;border:1px solid #7f7f7f"></div>
<div class="t" style="left:1029px;top:128.39px;font-size:12.3px;color:#fa7d00;font-weight:bold">Calculation</div>
<div class="a" style="left:1131px;top:124px;width:100px;height:21px;background:#a5a5a5;border:3px double #3f3f3f"></div>
<div class="t" style="left:1136px;top:128.39px;font-size:12.3px;color:#fff;font-weight:bold">Check Cell</div>
<div class="t" style="left:1240.5px;top:127.37px;font-size:13.5px;color:#7f7f7f;font-style:italic">Explanatory ...</div>
<div class="a" style="left:1343px;top:124px;width:100px;height:21px;background:#ffcc99;border:1px solid #7f7f7f"></div>
<div class="t" style="left:1347.5px;top:127.37px;font-size:13.5px;color:#3f3f76;">Input</div>
<div class="a" style="left:1447px;top:90px;width:15px;height:62px;border-left:1px solid #e0e0e0"></div>
<div class="a" style="left:1448px;top:110px;width:13px;height:1px;background:#e0e0e0"></div>
<div class="a" style="left:1448px;top:131px;width:13px;height:1px;background:#e0e0e0"></div>
<svg style="left:1451px;top:98px;" width="7" height="4" viewBox="0 0 7 4"><path d="M0.5 3.5 L3.5 0.5 L6.5 3.5" fill="none" stroke="#aaa" stroke-width="0.9"/></svg>
<svg style="left:1451px;top:119px;" width="7" height="4" viewBox="0 0 7 4"><path d="M0.5 0.5 L3.5 3.5 L6.5 0.5" fill="none" stroke="#444" stroke-width="0.9"/></svg>
<svg style="left:1451px;top:138px;" width="7" height="7" viewBox="0 0 7 7"><path d="M0.5 0.5 H6.5" stroke="#444" stroke-width="0.9"/><path d="M0.5 3 L3.5 6 L6.5 3" fill="none" stroke="#444" stroke-width="0.9"/></svg>
<svg style="left:1488px;top:90px;" width="30" height="22" viewBox="0 0 30 22"><rect x="0.5" y="0.5" width="28" height="21" fill="#f0f0f0" stroke="#b5b5b5"/><path d="M0.5 7.5 H28.5 M0.5 14.5 H28.5 M10 0.5 V21.5 M19 0.5 V21.5" stroke="#b5b5b5" stroke-width="0.9"/><rect x="8" y="7.5" width="21" height="7" fill="#c8c8c8"/><path d="M14 11 H2 M6.5 6.5 L1.5 11 L6.5 15.5" fill="none" stroke="#b5b5b5" stroke-width="1.6"/><path d="M14 11 H2.5 M6.5 7 L2 11 L6.5 15" fill="none" stroke="#fff" stroke-width="0.6"/></svg>
<div class="t" style="left:1487.5px;top:122.84px;font-size:12px;color:#242424;">Insert</div>
<svg style="left:1499px;top:142.5px;" width="7" height="4.5" viewBox="0 0 7 4.5"><path d="M0.5 0.5 L3.5 4.0 L6.5 0.5" fill="none" stroke="#444" stroke-width="1.1"/></svg>
<svg style="left:1532px;top:90px;" width="30" height="22" viewBox="0 0 30 22"><rect x="0.5" y="0.5" width="28" height="21" fill="#f0f0f0" stroke="#b5b5b5"/><path d="M0.5 7.5 H28.5 M0.5 14.5 H28.5 M10 0.5 V21.5 M19 0.5 V21.5" stroke="#b5b5b5" stroke-width="0.9"/><rect x="0.5" y="7.5" width="17" height="7" fill="#c8c8c8"/><path d="M19 4 L29 18 M29 4 L19 18" stroke="#b5b5b5" stroke-width="1.6"/></svg>
<div class="t" style="left:1529.5px;top:122.84px;font-size:12px;color:#242424;">Delete</div>
<svg style="left:1543px;top:142.5px;" width="7" height="4.5" viewBox="0 0 7 4.5"><path d="M0.5 0.5 L3.5 4.0 L6.5 0.5" fill="none" stroke="#444" stroke-width="1.1"/></svg>
<svg style="left:1576px;top:85px;" width="29" height="28" viewBox="0 0 29 28"><path d="M6 1.5 H23 M6 0 V3 M23 0 V3" stroke="#1a86d8" stroke-width="1"/><g transform="translate(0,5.5)"><rect x="0.5" y="0.5" width="28" height="21" fill="#fff" stroke="#333"/><rect x="7.5" y="6.5" width="14" height="8" fill="#7bb6ea" stroke="#1a6fc4"/><path d="M0.5 7.5 H28.5 M0.5 14.5 H28.5 M10 0.5 V21.5 M19 0.5 V21.5" stroke="#333" stroke-width="0.9"/></g></svg>
<div class="t" style="left:1571px;top:121.64px;font-size:12px;color:#242424;">Format</div>
<svg style="left:1587.5px;top:142px;" width="7" height="4.5" viewBox="0 0 7 4.5"><path d="M0.5 0.5 L3.5 4.0 L6.5 0.5" fill="none" stroke="#444" stroke-width="1.1"/></svg>
<svg style="left:1633px;top:86px;" width="14" height="16" viewBox="0 0 14 16"><path d="M13 2.5 V1 H1.5 L7.5 8 L1.5 15 H13 V13.5" fill="none" stroke="#444" stroke-width="1.1"/></svg>
<div class="t" style="left:1652px;top:88.44px;font-size:12px;color:#242424;">AutoSum</div>
<svg style="left:1715px;top:92.5px;" width="7" height="4.5" viewBox="0 0 7 4.5"><path d="M0.5 0.5 L3.5 4.0 L6.5 0.5" fill="none" stroke="#444" stroke-width="1.1"/></svg>
<svg style="left:1632px;top:112px;" width="17" height="16" viewBox="0 0 17 16"><rect x="0.5" y="0.5" width="15.5" height="14.5" fill="none" stroke="#444"/><path d="M0.5 3 H16" stroke="#444"/><path d="M8.25 5 V12.5 M5.3 9.5 L8.25 12.5 L11.2 9.5" fill="none" stroke="#1a86d8" stroke-width="1.1"/></svg>
<div class="t" style="left:1652.5px;top:114.74px;font-size:12px;color:#242424;">Fill</div>
<svg style="left:1672.5px;top:119.5px;" width="5" height="3.5" viewBox="0 0 5 3.5"><path d="M0.5 0.5 L2.5 3.0 L4.5 0.5" fill="none" stroke="#444" stroke-width="1.1"/></svg>
<svg style="left:1632px;top:138px;" width="17" height="16" viewBox="0 0 17 16"><path d="M1 10.5 L9.5 2 L15.5 7.5 L7 15.5 Z" fill="#fff" stroke="#9a3fb0" stroke-width="1.1"/><path d="M1 10.5 L5 6.5 L11 12 L7 15.5 Z" fill="#c88ae0" stroke="#9a3fb0" stroke-width="1"/></svg>
<div class="t" style="left:1652.5px;top:140.44px;font-size:12px;color:#242424;">Clear</div>
<svg style="left:1683px;top:145.5px;" width="5" height="3.5" viewBox="0 0 5 3.5"><path d="M0.5 0.5 L2.5 3.0 L4.5 0.5" fill="none" stroke="#444" stroke-width="1.1"/></svg>
<svg style="left:1735px;top:88px;" width="31" height="27" viewBox="0 0 31 27"><text x="-0.5" y="13" font-size="15" fill="#b5b5b5" font-family="Liberation Sans">A</text><text x="0" y="27" font-size="15" fill="#b5b5b5" font-family="Liberation Sans">Z</text><path d="M12 8.5 H29.5 L23 15.5 V22.5 L19.5 20.5 V15.5 Z" fill="none" stroke="#b5b5b5" stroke-width="1.2"/></svg>
<div class="t" style="left:1650px;width:200px;text-align:center;top:121.64px;font-size:12px;color:#a6a6a6;">Sort &amp;</div>
<div class="t" style="left:1644.5px;width:200px;text-align:center;top:137.64px;font-size:12px;color:#a6a6a6;">Filter</div>
<svg style="left:1761.5px;top:142px;" width="5" height="3.5" viewBox="0 0 5 3.5"><path d="M0.5 0.5 L2.5 3.0 L4.5 0.5" fill="none" stroke="#b5b5b5" stroke-width="1.1"/></svg>
<svg style="left:1781px;top:87px;" width="30" height="30" viewBox="0 0 30 30"><circle cx="20" cy="9.5" r="8.6" fill="none" stroke="#333" stroke-width="1.2"/><path d="M13.8 15.6 L1.2 28.2" stroke="#333" stroke-width="1.3"/></svg>
<div class="t" style="left:1695.5px;width:200px;text-align:center;top:121.64px;font-size:12px;color:#242424;">Find &amp;</div>
<div class="t" style="left:1690.5px;width:200px;text-align:center;top:137.64px;font-size:12px;color:#242424;">Select</div>
<svg style="left:1811px;top:142px;" width="5" height="3.5" viewBox="0 0 5 3.5"><path d="M0.5 0.5 L2.5 3.0 L4.5 0.5" fill="none" stroke="#444" stroke-width="1.1"/></svg>
<svg style="left:1889px;top:161px;" width="11" height="6" viewBox="0 0 11 6"><path d="M0.5 0.5 L5.5 5 L10.5 0.5" fill="none" stroke="#444" stroke-width="1.1"/></svg>
<div class="a" style="left:8px;top:186px;width:102px;height:26px;background:#fff;border:1px solid #dadada;border-radius:4px"></div>
<div class="t" style="left:15px;top:193.66px;font-size:12.8px;color:#242424;">D19</div>
<svg style="left:94px;top:197px;" width="10" height="6" viewBox="0 0 10 6"><path d="M0.5 0.5 L5 5 L9.5 0.5" fill="none" stroke="#333" stroke-width="1.1"/></svg>
<svg style="left:118px;top:192px;" width="4" height="14" viewBox="0 0 4 14"><circle cx="2" cy="2" r="1.2" fill="#333"/><circle cx="2" cy="7" r="1.2" fill="#333"/><circle cx="2" cy="12" r="1.2" fill="#333"/></svg>
<div class="a" style="left:131px;top:186px;width:73px;height:26px;background:#fff;border:1px solid #dadada;border-radius:4px"></div>
<svg style="left:137px;top:193px;" width="12" height="12" viewBox="0 0 12 12"><path d="M0.5 0.5 L11.5 11.5 M11.5 0.5 L0.5 11.5" stroke="#bdbdbd" stroke-width="1.1"/></svg>
<svg style="left:159px;top:193px;" width="15" height="11" viewBox="0 0 15 11"><path d="M0.5 6 L5 10.5 L14.5 0.5" fill="none" stroke="#bdbdbd" stroke-width="1.1"/></svg>
<div class="t" style="left:183.5px;top:190.61px;font-size:17px;color:#333;font-style:italic;font-family:'Liberation Serif',serif;letter-spacing:-0.3px">fx</div>
<div class="a" style="left:208px;top:186px;width:1702px;height:26px;background:#fff;border:1px solid #dadada;border-radius:4px"></div>
<div class="t" style="left:220px;top:193.07px;font-size:13.5px;color:#242424;">Marketing</div>
<svg style="left:1893px;top:196px;" width="11" height="6" viewBox="0 0 11 6"><path d="M0.5 0.5 L5.5 5 L10.5 0.5" fill="none" stroke="#333" stroke-width="1.1"/></svg>
<div class="a" style="left:0;top:986px;width:1920px;height:31px;background:#f0f0f0"></div>
<svg style="left:29px;top:996px;" width="6" height="10" viewBox="0 0 6 10"><path d="M5.5 0.5 L0.5 5 L5.5 9.5" fill="none" stroke="#999" stroke-width="1"/></svg>
<svg style="left:61px;top:996px;" width="6" height="10" viewBox="0 0 6 10"><path d="M0.5 0.5 L5.5 5 L0.5 9.5" fill="none" stroke="#999" stroke-width="1"/></svg>
<div class="a" style="left:116px;top:986px;width:47px;height:28px;background:#fff;border-radius:0 0 5px 5px;box-shadow:0 1px 1px rgba(0,0,0,.15)"></div>
<div class="t" style="left:124.5px;top:995.16px;font-size:12.8px;color:#242424;font-weight:bold">Data</div>
<div class="a" style="left:124px;top:1008px;width:30px;height:2px;background:#107c41"></div>
<div class="a" style="left:166px;top:993px;width:1px;height:17px;background:#c8c8c8"></div>
<svg style="left:208px;top:995px;" width="11" height="11" viewBox="0 0 11 11"><path d="M5.5 0 V11 M0 5.5 H11" stroke="#444" stroke-width="1.1"/></svg>
<svg style="left:1154px;top:996px;" width="3" height="12" viewBox="0 0 3 12"><circle cx="1.5" cy="1.5" r="1" fill="#444"/><circle cx="1.5" cy="6" r="1" fill="#444"/><circle cx="1.5" cy="10.5" r="1" fill="#444"/></svg>
<div class="a" style="left:1172px;top:991px;width:728px;height:20px;background:#f7f7f7;border-radius:10px"></div>
<svg style="left:1178px;top:997px;" width="7" height="9" viewBox="0 0 7 9"><path d="M7 0 V9 L0 4.5 Z" fill="#777"/></svg>
<div class="a" style="left:1188px;top:997px;width:664px;height:9px;background:#777;border-radius:5px"></div>
<svg style="left:1887px;top:997px;" width="7" height="9" viewBox="0 0 7 9"><path d="M0 0 V9 L7 4.5 Z" fill="#777"/></svg>
<div class="a" style="left:0px;top:1017px;width:1920px;height:1px;background:#e3e3e3"></div>
<div class="a" style="left:0;top:1018px;width:1920px;height:22px;background:#f0f0f0"></div>
<div class="t" style="left:8px;top:1023.26px;font-size:11.5px;color:#444;">Ready</div>
<svg style="left:58px;top:1021px;" width="15" height="15" viewBox="0 0 15 15"><circle cx="6" cy="2.5" r="1.6" fill="none" stroke="#444"/><path d="M1 5 H11 M6 5 V9 L3 14 M6 9 L9 14" fill="none" stroke="#444"/><path d="M9 9 L14 14 M14 9 L9 14" stroke="#444"/></svg>
<div class="t" style="left:76px;top:1023.26px;font-size:11.5px;color:#444;">Accessibility: Investigate</div>
<div class="t" style="left:1558px;top:1023.26px;font-size:11.5px;color:#444;">Count: 6</div>
<div class="a" style="left:1620px;top:1018px;width:40px;height:22px;background:#dedede"></div>
<svg style="left:1632px;top:1022px;" width="15" height="14" viewBox="0 0 15 14"><rect x="0.5" y="0.5" width="14" height="13" fill="none" stroke="#333"/><path d="M5 0.5 V13.5 M10 0.5 V13.5 M0.5 5 H14.5 M0.5 9 H14.5" stroke="#333"/></svg>
<svg style="left:1673px;top:1022px;" width="15" height="14" viewBox="0 0 15 14"><rect x="0.5" y="0.5" width="14" height="13" fill="none" stroke="#333"/><rect x="3" y="3" width="9" height="8" fill="none" stroke="#333"/><path d="M4.5 5.5 H10.5 M4.5 8 H10.5" stroke="#333"/></svg>
<svg style="left:1712px;top:1022px;" width="15" height="14" viewBox="0 0 15 14"><rect x="0.5" y="0.5" width="14" height="13" fill="none" stroke="#333"/><path d="M5 0.5 V8 H10 V0.5" fill="none" stroke="#333"/></svg>
<div class="a" style="left:1745px;top:1028px;width:9px;height:1px;background:#444"></div>
<div class="a" style="left:1759px;top:1028px;width:100px;height:1px;background:#888"></div>
<div class="a" style="left:1808px;top:1022px;width:4px;height:12px;background:#555"></div>
<svg style="left:1862px;top:1023px;" width="9" height="9" viewBox="0 0 9 9"><path d="M4.5 0 V9 M0 4.5 H9" stroke="#444"/></svg>
<div class="t" style="left:1884px;top:1023.26px;font-size:11.5px;color:#444;">100%</div>
<div class="a" style="left:489px;top:299px;width:281px;height:56px;background:#fff;border:1px solid #d0d0d0;box-shadow:1px 1px 3px rgba(0,0,0,.12)"></div>
<div class="a" style="left:495px;top:303px;width:64px;height:24px;border:1px solid #8a8a8a;border-radius:4px;background:#fff"></div>
<div class="t" style="left:498px;top:309px;font-size:12.5px;color:#242424;">Calibri</div>
<svg style="left:546px;top:313.0px;" width="7" height="4.5" viewBox="0 0 7 4.5"><path d="M0.5 0.5 L3.5 4.0 L6.5 0.5" fill="none" stroke="#333" stroke-width="1.1"/></svg>
<div class="a" style="left:561px;top:303px;width:46px;height:24px;border:1px solid #8a8a8a;border-radius:4px;background:#fff"></div>
<div class="t" style="left:564px;top:309px;font-size:12.5px;color:#242424;">11</div>
<svg style="left:594px;top:313.0px;" width="7" height="4.5" viewBox="0 0 7 4.5"><path d="M0.5 0.5 L3.5 4.0 L6.5 0.5" fill="none" stroke="#333" stroke-width="1.1"/></svg>
<div class="t" style="left:612px;top:307px;font-size:16px;color:#333;">A</div>
<svg style="left:624px;top:308px;" width="5" height="4" viewBox="0 0 5 4"><path d="M0.5 3.5 L2.5 0.8 L4.5 3.5" fill="none" stroke="#1a86d8" stroke-width="1"/></svg>
<div class="t" style="left:638px;top:310px;font-size:13px;color:#333;">A</div>
<svg style="left:648px;top:308px;" width="5" height="4" viewBox="0 0 5 4"><path d="M0.5 0.5 L2.5 3.2 L4.5 0.5" fill="none" stroke="#1a86d8" stroke-width="1"/></svg>
<svg style="left:660px;top:310px;" width="17" height="16" viewBox="0 0 17 16"><rect x="0.5" y="0.5" width="15" height="10" fill="none" stroke="#333"/><text x="1.5" y="8.3" font-size="7.5" fill="#333" font-family="Liberation Sans" font-weight="bold">CC</text><path d="M8.5 8.5 V14 C8.5 15.6 15.5 15.6 15.5 14 V8.5" fill="#fff" stroke="#e07a10" stroke-width="1"/><ellipse cx="12" cy="8.5" rx="3.5" ry="1.4" fill="#fff" stroke="#e07a10" stroke-width="1"/><path d="M8.5 11.2 C8.5 12.8 15.5 12.8 15.5 11.2" fill="none" stroke="#e07a10" stroke-width="0.9"/></svg>
<svg style="left:682px;top:314px;" width="7" height="4.5" viewBox="0 0 7 4.5"><path d="M0.5 0.5 L3.5 4.0 L6.5 0.5" fill="none" stroke="#444" stroke-width="1.1"/></svg>
<div class="t" style="left:699px;top:307px;font-size:16.5px;color:#333;">%</div>
<svg style="left:728px;top:310px;" width="7" height="11" viewBox="0 0 7 11"><circle cx="3.3" cy="3.3" r="2.7" fill="#333"/><path d="M5.6 3.8 C5.8 7.5 4 9 1.2 10.5" fill="none" stroke="#333" stroke-width="1.6"/></svg>
<svg style="left:747px;top:307px;" width="16" height="15" viewBox="0 0 16 15"><rect x="0.5" y="0.5" width="15" height="14" fill="none" stroke="#aaa"/><path d="M0.5 4 H15.5 M0.5 11 H15.5 M8 0.5 V4 M8 11 V14.5" stroke="#aaa"/><path d="M3 7.5 H13 M5 5.8 L3 7.5 L5 9.2 M11 5.8 L13 7.5 L11 9.2" fill="none" stroke="#aaa"/></svg>
<div class="t" style="left:503px;top:332px;font-size:13.5px;color:#333;font-weight:bold">B</div>
<div class="t" style="left:527px;top:332px;font-size:14px;color:#333;font-style:italic;font-family:'Liberation Serif',serif">I</div>
<svg style="left:547px;top:332px;" width="15" height="13" viewBox="0 0 15 13"><path d="M0 0.5 H14 M2 4.5 H12 M0 8.5 H14 M2 12.5 H12" stroke="#333" stroke-width="1.1"/></svg>
<svg style="left:570px;top:330px;" width="16" height="18" viewBox="0 0 16 18"><path d="M4.8 6 L9.5 3.5 L12.5 9.5 L7.5 12.8 L2.5 8 Z" fill="none" stroke="#333" stroke-width="1"/><path d="M5 5.5 V2.2 C5 0.6 7.5 0.6 7.5 2.2 V7.2" fill="none" stroke="#333" stroke-width="1"/><path d="M12.5 4.2 C14 4.8 14.3 7.5 13.3 9.2" fill="none" stroke="#1a6fc4" stroke-width="1.6"/><rect x="0" y="13.5" width="16" height="4" fill="#ffff00"/></svg>
<svg style="left:592px;top:338px;" width="7" height="4.5" viewBox="0 0 7 4.5"><path d="M0.5 0.5 L3.5 4.0 L6.5 0.5" fill="none" stroke="#444" stroke-width="1.1"/></svg>
<div class="t" style="left:610px;top:331px;font-size:14px;color:#333;">A</div>
<div class="a" style="left:609px;top:343px;width:16px;height:4px;background:#ff0000"></div>
<svg style="left:632px;top:338px;" width="7" height="4.5" viewBox="0 0 7 4.5"><path d="M0.5 0.5 L3.5 4.0 L6.5 0.5" fill="none" stroke="#444" stroke-width="1.1"/></svg>
<svg style="left:648px;top:331px;" width="16" height="15" viewBox="0 0 16 15"><rect x="0.5" y="0.5" width="15" height="13" fill="none" stroke="#555" stroke-dasharray="1.2 1.2" stroke-width="0.9"/><path d="M8 1 V13 M1 7 H15" stroke="#555" stroke-dasharray="1.2 1.2" stroke-width="0.9"/><path d="M0 14.5 H16" stroke="#333" stroke-width="1.1"/></svg>
<svg style="left:670px;top:338px;" width="7" height="4.5" viewBox="0 0 7 4.5"><path d="M0.5 0.5 L3.5 4.0 L6.5 0.5" fill="none" stroke="#444" stroke-width="1.1"/></svg>
<svg style="left:687px;top:331px;" width="16" height="15" viewBox="0 0 16 15"><text x="9" y="7" font-size="8.5" fill="#333" font-family="Liberation Sans">0</text><text x="2" y="15" font-size="8.5" fill="#333" font-family="Liberation Sans">.00</text><path d="M8 4.5 H1 M3.5 2 L1 4.5 L3.5 7" fill="none" stroke="#1a86d8" stroke-width="1.1"/></svg>
<svg style="left:711px;top:331px;" width="16" height="15" viewBox="0 0 16 15"><text x="2" y="7" font-size="8.5" fill="#333" font-family="Liberation Sans">.00</text><text x="8" y="15" font-size="8.5" fill="#333" font-family="Liberation Sans">.0</text><path d="M1 11.5 H9 M6.5 9 L9 11.5 L6.5 14" fill="none" stroke="#1a86d8" stroke-width="1.1"/></svg>
<svg style="left:735px;top:331px;" width="17" height="17" viewBox="0 0 17 17"><path d="M11 5 L15.3 0.8 L16.5 2 L12.2 6.2 Z" fill="#fff" stroke="#333" stroke-width="1.1"/><path d="M8.8 5.3 L12 8.5 L10.3 10.2 L7.1 7 Z" fill="#fff" stroke="#333" stroke-width="1.1"/><path d="M7.1 7 L10.3 10.2 L7 15.8 L0.8 9.8 Z" fill="#fbd38b" stroke="#e07a10" stroke-width="1.2"/></svg>
<div class="a" style="left:489px;top:371px;width:224px;height:626px;background:#fff;border:1px solid #d0d0d0;box-shadow:2px 2px 4px rgba(0,0,0,.15)"></div>
<div class="a" style="left:495px;top:376px;width:212px;height:27px;border:1px solid #8a8a8a;background:#fff"></div>
<div class="t" style="left:508px;top:383px;font-size:12px;color:#6e6e6e;">Search the menus</div>
<div class="a" style="left:490px;top:911px;width:222px;height:28px;background:#f0f0f0"></div>
<div class="t" style="left:528px;top:416px;font-size:11.9px;color:#242424;">Cu<u>t</u></div>
<svg style="left:506px;top:413px;" width="11" height="16" viewBox="0 0 11 16"><path d="M2.5 0.5 L8 11 M8.5 0.5 L3 11" stroke="#555" stroke-width="0.9"/><circle cx="2.8" cy="13.2" r="1.9" fill="none" stroke="#1a86d8" stroke-width="1.1"/><circle cx="8.2" cy="13.2" r="1.9" fill="none" stroke="#1a86d8" stroke-width="1.1"/></svg>
<div class="t" style="left:528px;top:444px;font-size:11.9px;color:#242424;"><u>C</u>opy</div>
<svg style="left:503px;top:440px;" width="15" height="16" viewBox="0 0 15 16"><path d="M4 0.5 H0.5 V13.5 H4" fill="none" stroke="#555"/><path d="M4 2.5 H10 L14 6.5 V15.5 H4 Z" fill="none" stroke="#555"/><path d="M6.5 10 H11.5 M6.5 12.5 H11.5" stroke="#555" stroke-width="0.9"/></svg>
<div class="t" style="left:528px;top:473px;font-size:11.9px;color:#242424;font-weight:bold;font-size:11.2px">Paste Options:</div>
<svg style="left:505px;top:469px;" width="16" height="17" viewBox="0 0 16 17"><path d="M1 3 H11 V16 H1 Z" fill="#fff" stroke="#e07a10" stroke-width="1.2"/><path d="M4 2.5 H5.5 C5.5 1 6 0.5 6.5 0.5 C7 0.5 7.5 1 7.5 2.5 H9 V5 H4 Z" fill="#fff" stroke="#666" stroke-width="0.9"/><rect x="7" y="7.5" width="7.5" height="9" fill="#f7f7f7" stroke="#333"/></svg>
<svg style="left:528px;top:497px;" width="22" height="24" viewBox="0 0 22 24"><path d="M1 4 H15 V23 H1 Z" fill="#fff" stroke="#e07a10" stroke-width="1.3"/><path d="M5 3.5 H7 C7 1.5 7.5 0.7 8 0.7 C8.5 0.7 9 1.5 9 3.5 H11 V7 H5 Z" fill="#fff" stroke="#666" stroke-width="1"/><rect x="10" y="11" width="10" height="12" fill="#f7f7f7" stroke="#333" stroke-width="1.1"/></svg>
<div class="t" style="left:528px;top:534px;font-size:11.9px;color:#242424;">Paste <u>S</u>pecial...</div>
<div class="a" style="left:523px;top:555px;width:188px;height:1px;background:#e1e1e1"></div>
<div class="t" style="left:528px;top:565px;font-size:11.9px;color:#242424;">Smart <u>L</u>ookup</div>
<svg style="left:503px;top:562px;" width="17" height="17" viewBox="0 0 17 17"><circle cx="11" cy="6" r="5" fill="none" stroke="#1a86d8" stroke-width="1.1"/><path d="M7.3 9.7 L0.8 16.2" stroke="#1a86d8" stroke-width="1.3"/><path d="M11 5 V8.5" stroke="#1a86d8"/><circle cx="11" cy="3.3" r="0.7" fill="#1a86d8"/></svg>
<div class="a" style="left:523px;top:586px;width:188px;height:1px;background:#e1e1e1"></div>
<div class="t" style="left:528px;top:596px;font-size:11.9px;color:#a6a6a6;"><u>R</u>efresh</div>
<svg style="left:504px;top:593px;" width="15" height="16" viewBox="0 0 15 16"><path d="M8 0.5 H0.5 V15.5 H4" fill="none" stroke="#b5b5b5"/><path d="M8 0.5 L11 3.5 V6" fill="none" stroke="#b5b5b5"/><path d="M6 11 A4 4 0 0 1 13 9 M14 12 A4 4 0 0 1 7 14" fill="none" stroke="#b5b5b5"/></svg>
<div class="a" style="left:523px;top:617px;width:188px;height:1px;background:#e1e1e1"></div>
<div class="t" style="left:528px;top:627px;font-size:11.9px;color:#242424;"><u>I</u>nsert</div>
<svg style="left:697px;top:627px;" width="6" height="10" viewBox="0 0 6 10"><path d="M0.5 0.5 L5 5 L0.5 9.5" fill="none" stroke="#444" stroke-width="1"/></svg>
<div class="t" style="left:528px;top:655px;font-size:11.9px;color:#242424;"><u>D</u>elete</div>
<svg style="left:697px;top:655px;" width="6" height="10" viewBox="0 0 6 10"><path d="M0.5 0.5 L5 5 L0.5 9.5" fill="none" stroke="#444" stroke-width="1"/></svg>
<div class="t" style="left:528px;top:683px;font-size:11.9px;color:#242424;">Se<u>l</u>ect</div>
<svg style="left:697px;top:683px;" width="6" height="10" viewBox="0 0 6 10"><path d="M0.5 0.5 L5 5 L0.5 9.5" fill="none" stroke="#444" stroke-width="1"/></svg>
<div class="t" style="left:528px;top:711px;font-size:11.9px;color:#a6a6a6;">Clear Co<u>n</u>tents</div>
<div class="a" style="left:523px;top:732px;width:188px;height:1px;background:#e1e1e1"></div>
<div class="t" style="left:528px;top:742px;font-size:11.9px;color:#a6a6a6;"><u>Q</u>uick Analysis</div>
<svg style="left:503px;top:740px;" width="16" height="14" viewBox="0 0 16 14"><rect x="0.5" y="3.5" width="15" height="10" fill="none" stroke="#b5b5b5"/><path d="M3 11 H13 M4 8 L7 5 L9 7 L12 2" fill="none" stroke="#b5b5b5"/></svg>
<div class="t" style="left:528px;top:770px;font-size:11.9px;color:#242424;">S<u>o</u>rt</div>
<svg style="left:697px;top:770px;" width="6" height="10" viewBox="0 0 6 10"><path d="M0.5 0.5 L5 5 L0.5 9.5" fill="none" stroke="#444" stroke-width="1"/></svg>
<div class="t" style="left:528px;top:798px;font-size:11.9px;color:#242424;">Filt<u>e</u>r</div>
<svg style="left:697px;top:798px;" width="6" height="10" viewBox="0 0 6 10"><path d="M0.5 0.5 L5 5 L0.5 9.5" fill="none" stroke="#444" stroke-width="1"/></svg>
<div class="t" style="left:528px;top:826px;font-size:11.9px;color:#242424;">Ta<u>b</u>le</div>
<svg style="left:697px;top:826px;" width="6" height="10" viewBox="0 0 6 10"><path d="M0.5 0.5 L5 5 L0.5 9.5" fill="none" stroke="#444" stroke-width="1"/></svg>
<div class="a" style="left:523px;top:847px;width:188px;height:1px;background:#e1e1e1"></div>
<div class="t" style="left:528px;top:857px;font-size:11.9px;color:#242424;"><u>G</u>et Data from Table/Range...</div>
<svg style="left:503px;top:854px;" width="16" height="15" viewBox="0 0 16 15"><rect x="0.5" y="0.5" width="15" height="14" fill="none" stroke="#444"/><path d="M0.5 4 H15.5 M0.5 7.5 H15.5 M0.5 11 H15.5 M5.5 4 V14.5" stroke="#444" stroke-width="0.9"/><path d="M3 2 H6 M10 2 H13" stroke="#1a86d8" stroke-width="1.2"/></svg>
<div class="a" style="left:523px;top:878px;width:188px;height:1px;background:#e1e1e1"></div>
<div class="t" style="left:528px;top:888px;font-size:11.9px;color:#242424;">Insert Co<u>m</u>ment</div>
<svg style="left:503px;top:884px;" width="16" height="15" viewBox="0 0 16 15"><path d="M4 3.5 H15.5 V11.5 H8 L4.5 14.5 V11.5 H0.5 V6" fill="none" stroke="#444"/><path d="M3 0.5 V6.5 M0 3.5 H6" stroke="#107c41" stroke-width="1.1"/></svg>
<div class="a" style="left:523px;top:909px;width:188px;height:1px;background:#e1e1e1"></div>
<div class="t" style="left:528px;top:920px;font-size:11.9px;color:#242424;"><u>F</u>ormat Cells...</div>
<svg style="left:504px;top:915px;" width="13" height="17" viewBox="0 0 13 17"><rect x="0.5" y="0.5" width="12" height="16" fill="none" stroke="#444"/><rect x="3" y="4" width="2.5" height="2.5" fill="none" stroke="#444" stroke-width="0.8"/><rect x="3" y="10" width="2.5" height="2.5" fill="none" stroke="#444" stroke-width="0.8"/><path d="M7 5.3 H9.5 M7 11.3 H9.5" stroke="#444" stroke-width="0.8"/></svg>
<div class="a" style="left:499px;top:912px;width:138px;height:29px;border:3px solid #ee1111"></div>
<div class="t" style="left:528px;top:947px;font-size:11.9px;color:#242424;">Pic<u>k</u> From Drop-down List...</div>
<div class="t" style="left:528px;top:975px;font-size:11.9px;color:#a6a6a6;">L<u>i</u>nk</div>
<svg style="left:503px;top:974px;" width="16" height="11" viewBox="0 0 16 11"><ellipse cx="5" cy="4" rx="4.5" ry="3.5" fill="none" stroke="#b5b5b5" stroke-width="1.1"/><ellipse cx="11" cy="7" rx="4.5" ry="3.5" fill="none" stroke="#b5b5b5" stroke-width="1.1"/></svg>
<div class="t" style="left:704px;top:883.5px;font-size:28px;font-weight:bold;font-style:italic;color:#000;letter-spacing:-0.6px;transform:scaleX(0.965);transform-origin:0 0;text-shadow:1.50px 0.00px 0.6px #fff,1.30px 0.75px 0.6px #fff,0.75px 1.30px 0.6px #fff,0.00px 1.50px 0.6px #fff,-0.75px 1.30px 0.6px #fff,-1.30px 0.75px 0.6px #fff,-1.50px 0.00px 0.6px #fff,-1.30px -0.75px 0.6px #fff,-0.75px -1.30px 0.6px #fff,-0.00px -1.50px 0.6px #fff,0.75px -1.30px 0.6px #fff,1.30px -0.75px 0.6px #fff,3.00px 0.00px 0.6px #fff,2.60px 1.50px 0.6px #fff,1.50px 2.60px 0.6px #fff,0.00px 3.00px 0.6px #fff,-1.50px 2.60px 0.6px #fff,-2.60px 1.50px 0.6px #fff,-3.00px 0.00px 0.6px #fff,-2.60px -1.50px 0.6px #fff,-1.50px -2.60px 0.6px #fff,-0.00px -3.00px 0.6px #fff,1.50px -2.60px 0.6px #fff,2.60px -1.50px 0.6px #fff,4.00px 0.00px 0.6px #fff,3.46px 2.00px 0.6px #fff,2.00px 3.46px 0.6px #fff,0.00px 4.00px 0.6px #fff,-2.00px 3.46px 0.6px #fff,-3.46px 2.00px 0.6px #fff,-4.00px 0.00px 0.6px #fff,-3.46px -2.00px 0.6px #fff,-2.00px -3.46px 0.6px #fff,-0.00px -4.00px 0.6px #fff,2.00px -3.46px 0.6px #fff,3.46px -2.00px 0.6px #fff,0 6px 9px rgba(0,0,0,.28)">Select individual cells &gt; Right-click &gt; &#8220;Format Cells&#8221;</div>
</body></html>
